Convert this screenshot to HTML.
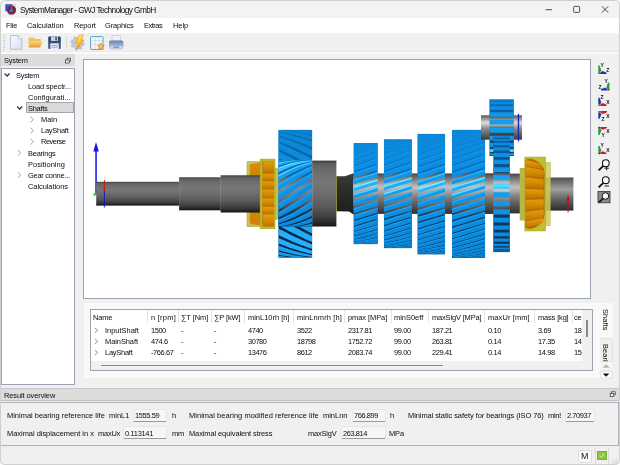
<!DOCTYPE html><html><head><meta charset="utf-8"><title>SystemManager - GWJ Technology GmbH</title><style>
*{margin:0;padding:0;box-sizing:border-box}
html,body{width:620px;height:465px;overflow:hidden;background:#f0f0f0}
body{font-family:"Liberation Sans",sans-serif;font-size:7.45px;color:#0c0c0c;position:relative}
.a{position:absolute}
.t{position:absolute;white-space:nowrap;line-height:10px;height:10px;will-change:transform}
.box{position:absolute;background:#fff;border:1px solid #9aa3b3}
.fld{position:absolute;background:#f6f6f6;border:1px solid #e6e6e6;border-bottom:1px solid #9a9a9a;border-radius:1.5px}
</style></head><body>
<div class="a" style="left:0px;top:0px;width:620px;height:18.4px;background:#f3f3f3;"></div>
<div class="a" style="left:0px;top:18.4px;width:620px;height:14.4px;background:#ffffff;"></div>
<div class="a" style="left:0px;top:33px;width:620px;height:20px;background:#f0f0f0;"></div>
<div class="a" style="left:0px;top:50.9px;width:620px;height:0.8px;background:#e8e8e8;"></div>
<div class="a" style="left:0px;top:51.7px;width:620px;height:1.9px;background:#f9f9f9;"></div>
<span class="t" style="left:19.5px;top:4.90px;font-size:8.3px;letter-spacing:-0.599px;">SystemManager - GWJ Technology GmbH</span>
<span class="t" style="left:6px;top:21.30px;letter-spacing:-0.176px;">File</span>
<span class="t" style="left:27px;top:21.30px;letter-spacing:-0.014px;">Calculation</span>
<span class="t" style="left:73.8px;top:21.30px;letter-spacing:-0.094px;">Report</span>
<span class="t" style="left:105.4px;top:21.30px;letter-spacing:-0.151px;">Graphics</span>
<span class="t" style="left:144px;top:21.30px;letter-spacing:-0.469px;">Extras</span>
<span class="t" style="left:172.6px;top:21.30px;letter-spacing:-0.031px;">Help</span>
<div class="a" style="left:0px;top:54.3px;width:75px;height:12.2px;background:#dcdcdc;"></div>
<span class="t" style="left:3.5px;top:56.20px;letter-spacing:-0.173px;">System</span>
<div class="box" style="left:0.8px;top:68px;width:74px;height:316.5px"></div>
<div class="a" style="left:26.2px;top:102.3px;width:48.2px;height:11.2px;background:#d9d9d9;border:1px solid #a6a6a6"></div>
<span class="t" style="left:15.5px;top:70.90px;letter-spacing:-0.273px;">System</span>
<span class="t" style="left:28.1px;top:81.99px;letter-spacing:-0.131px;">Load spectr...</span>
<span class="t" style="left:28.1px;top:93.08px;letter-spacing:0.026px;">Configurati...</span>
<span class="t" style="left:28.1px;top:104.17px;letter-spacing:-0.253px;">Shafts</span>
<span class="t" style="left:40.6px;top:115.26px;letter-spacing:0.013px;">Main</span>
<span class="t" style="left:40.6px;top:126.35px;letter-spacing:-0.238px;">LayShaft</span>
<span class="t" style="left:40.6px;top:137.44px;letter-spacing:-0.463px;">Reverse</span>
<span class="t" style="left:28.1px;top:148.53px;letter-spacing:-0.226px;">Bearings</span>
<span class="t" style="left:28.1px;top:159.62px;letter-spacing:0.050px;">Positioning</span>
<span class="t" style="left:28.1px;top:170.71px;letter-spacing:-0.249px;">Gear conne...</span>
<span class="t" style="left:28.1px;top:181.80px;letter-spacing:-0.049px;">Calculations</span>
<div class="box" style="left:83px;top:59px;width:508px;height:239.5px"></div>
<svg class="a" style="left:0;top:0" width="620" height="465" viewBox="0 0 620 465">
<defs>
<linearGradient id="gs" x1="0" y1="0" x2="0" y2="1"><stop offset="0" stop-color="#3a3a3a"/><stop offset=".05" stop-color="#5e5e5e"/><stop offset=".15" stop-color="#6c6c6c"/><stop offset=".32" stop-color="#767676"/><stop offset=".5" stop-color="#6e6e6e"/><stop offset=".7" stop-color="#595959"/><stop offset=".86" stop-color="#3e3e3e"/><stop offset=".95" stop-color="#262626"/><stop offset="1" stop-color="#121212"/></linearGradient>
<linearGradient id="gh" x1="0" y1="0" x2="0" y2="1"><stop offset="0" stop-color="#484848"/><stop offset=".34" stop-color="#c2c2c2"/><stop offset=".6" stop-color="#7a7a7a"/><stop offset="1" stop-color="#303030"/></linearGradient>
<linearGradient id="gr" x1="0" y1="0" x2="0" y2="1"><stop offset="0" stop-color="#555"/><stop offset=".3" stop-color="#dedede"/><stop offset=".55" stop-color="#8a8a8a"/><stop offset="1" stop-color="#3c3c3c"/></linearGradient>
<linearGradient id="gap" gradientUnits="userSpaceOnUse" x1="0" y1="129" x2="0" y2="259"><stop offset="0" stop-color="#0a7ed0"/><stop offset=".2" stop-color="#0978c8"/><stop offset=".335" stop-color="#0a6cb8"/><stop offset=".345" stop-color="#5a5a5a"/><stop offset=".44" stop-color="#c4c4c4"/><stop offset=".55" stop-color="#7c7c7c"/><stop offset=".65" stop-color="#3e3e3e"/><stop offset=".662" stop-color="#0e3f68"/><stop offset="1" stop-color="#0a2f50"/></linearGradient>
<linearGradient id="tooth" gradientUnits="userSpaceOnUse" x1="0" y1="129" x2="0" y2="259"><stop offset="0" stop-color="#0b84d6"/><stop offset=".3" stop-color="#0e94e6"/><stop offset=".4" stop-color="#1aa8f6"/><stop offset=".435" stop-color="#58e2ff"/><stop offset=".48" stop-color="#169ef0"/><stop offset=".7" stop-color="#0c8ee2"/><stop offset="1" stop-color="#0a86d8"/></linearGradient>
<linearGradient id="bback" gradientUnits="userSpaceOnUse" x1="0" y1="129" x2="0" y2="259"><stop offset="0" stop-color="#0a74c0"/><stop offset=".24" stop-color="#0a62a6"/><stop offset=".75" stop-color="#06263e"/><stop offset="1" stop-color="#062a46"/></linearGradient>

<linearGradient id="gaps" gradientUnits="userSpaceOnUse" x1="0" y1="129" x2="0" y2="259"><stop offset="0" stop-color="#0a5c9e"/><stop offset=".335" stop-color="#0a4f8a"/><stop offset=".345" stop-color="#5a5a5a"/><stop offset=".44" stop-color="#e0e0e0"/><stop offset=".55" stop-color="#7c7c7c"/><stop offset=".65" stop-color="#3a3a3a"/><stop offset=".662" stop-color="#0c3a62"/><stop offset="1" stop-color="#0a2f50"/></linearGradient>
<linearGradient id="grl" x1="0" y1="0" x2="0" y2="1"><stop offset="0" stop-color="#e69a0c"/><stop offset=".5" stop-color="#d68a02"/><stop offset="1" stop-color="#b87400"/></linearGradient>
<linearGradient id="gor" x1="0" y1="0" x2="0" y2="1"><stop offset="0" stop-color="#e88806"/><stop offset=".2" stop-color="#c88a04"/><stop offset=".8" stop-color="#c88a04"/><stop offset="1" stop-color="#e07c00"/></linearGradient>
<linearGradient id="gd" x1="0" y1="0" x2="0" y2="1"><stop offset="0" stop-color="#3a3a3a"/><stop offset=".3" stop-color="#303030"/><stop offset="1" stop-color="#1c1c1c"/></linearGradient>
<linearGradient id="gap1" gradientUnits="userSpaceOnUse" x1="0" y1="160" x2="0" y2="227"><stop offset="0" stop-color="#0a70bc"/><stop offset=".24" stop-color="#0a66ae"/><stop offset=".26" stop-color="#626262"/><stop offset=".42" stop-color="#8a8a8a"/><stop offset=".6" stop-color="#6a6a6a"/><stop offset=".74" stop-color="#3c3c3c"/><stop offset=".78" stop-color="#0c385c"/><stop offset="1" stop-color="#082c4a"/></linearGradient>
<linearGradient id="tooth1" gradientUnits="userSpaceOnUse" x1="0" y1="160" x2="0" y2="227"><stop offset="0" stop-color="#18a0f0"/><stop offset=".05" stop-color="#50dcff"/><stop offset=".12" stop-color="#18a4f4"/><stop offset=".5" stop-color="#0c90e4"/><stop offset="1" stop-color="#0a84d6"/></linearGradient>
<linearGradient id="gapr" gradientUnits="userSpaceOnUse" x1="0" y1="99" x2="0" y2="156"><stop offset="0" stop-color="#0a74c8"/><stop offset=".27" stop-color="#0a5a9c"/><stop offset=".3" stop-color="#484848"/><stop offset=".42" stop-color="#e0e0e0"/><stop offset=".52" stop-color="#555"/><stop offset=".7" stop-color="#333"/><stop offset=".72" stop-color="#0e4a78"/><stop offset="1" stop-color="#0a3a60"/></linearGradient>
<linearGradient id="toothr" gradientUnits="userSpaceOnUse" x1="0" y1="99" x2="0" y2="156"><stop offset="0" stop-color="#0b84d6"/><stop offset=".4" stop-color="#10a0f0"/><stop offset=".85" stop-color="#0e94e6"/><stop offset=".9" stop-color="#50dcff"/><stop offset="1" stop-color="#0c8ee0"/></linearGradient>
<linearGradient id="gh2" x1="0" y1="0" x2="0" y2="1"><stop offset="0" stop-color="#505050"/><stop offset=".36" stop-color="#a0a0a0"/><stop offset=".6" stop-color="#6c6c6c"/><stop offset="1" stop-color="#2c2c2c"/></linearGradient>
</defs>
<rect x="95.3" y="150" width="1.5" height="44" fill="#1010e8"/>
<polygon points="96,142 98.8,151.5 93.4,151.5" fill="#1010e8"/>
<circle cx="94.8" cy="194.4" r="1.4" fill="#10e020"/>
<rect x="96.2" y="181.8" width="83.1" height="23.8" fill="url(#gs)"/>
<rect x="179.1" y="177.3" width="41.7" height="33" fill="url(#gs)"/>
<rect x="247" y="161.7" width="13.4" height="64.8" fill="#c6c256" stroke="#aaa636" stroke-width=".6"/>
<path d="M249.8,166 Q250.5,163.8 254,163.6 L260.2,162.6 L260.2,225.4 L254,224.4 Q250.5,224.2 249.8,222 Z" fill="url(#gor)"/>
<path d="M250.5,165 L260.2,163.4" stroke="#f08408" stroke-width="1.1" fill="none"/>
<path d="M250.5,223 L260.2,224.4" stroke="#f07800" stroke-width="1.1" fill="none"/>
<rect x="220.6" y="175.3" width="39.7" height="37.2" fill="url(#gs)"/>
<rect x="103.9" y="180" width="0.9" height="11" fill="#d01010"/><rect x="103.9" y="191" width="0.9" height="16.5" fill="#1010d0"/><polygon points="103,188 105.7,188 104.35,191.5" fill="#d01010"/>
<rect x="260.2" y="167.8" width="18.1" height="52" fill="#c4c052"/>
<rect x="260.2" y="159.1" width="14.8" height="69.6" fill="#beb82e" stroke="#a6a226" stroke-width=".6"/>
<rect x="262.4" y="161" width="11.6" height="65.6" rx="1.5" fill="#b47200"/>
<rect x="263.2" y="161.25" width="10.8" height="12" rx="1" fill="url(#grl)"/>
<rect x="262.4" y="173.75" width="11.6" height="7" rx="1" fill="url(#grl)"/>
<rect x="262.4" y="181.25" width="11.6" height="7.8" rx="1" fill="url(#grl)"/>
<rect x="262.4" y="189.55" width="11.6" height="8.5" rx="1" fill="url(#grl)"/>
<rect x="262.4" y="198.55" width="11.6" height="7.8" rx="1" fill="url(#grl)"/>
<rect x="262.4" y="206.85" width="11.6" height="7" rx="1" fill="url(#grl)"/>
<rect x="263.2" y="214.35" width="10.8" height="12" rx="1" fill="url(#grl)"/>
<clipPath id="c1"><rect x="278.3" y="129.7" width="34" height="128.1"/></clipPath>
<g clip-path="url(#c1)">
<rect x="278.3" y="129.7" width="34" height="128.1" fill="url(#bback)"/>
<polygon points="278.3,129.7 283.97,129.7 289.63,129.7 295.3,129.7 300.97,129.7 306.63,129.7 312.3,129.7 312.3,129.72 306.63,129.7 300.97,129.7 295.3,129.7 289.63,129.7 283.97,129.7 278.3,129.7" fill="#0b84d4"/>
<polygon points="278.3,129.7 283.97,129.7 289.63,129.7 295.3,129.7 300.97,129.7 306.63,129.71 312.3,129.89 312.3,131.07 306.63,130.42 300.97,129.98 295.3,129.74 289.63,129.7 283.97,129.7 278.3,129.7" fill="#0b84d4"/>
<polygon points="278.3,129.7 283.97,129.7 289.63,129.74 295.3,129.97 300.97,130.41 306.63,131.05 312.3,131.89 312.3,134.56 306.63,133.27 300.97,132.17 295.3,131.27 289.63,130.58 283.97,130.08 278.3,129.79" fill="#0b84d5"/>
<polygon points="278.3,130.07 283.97,130.56 289.63,131.26 295.3,132.15 300.97,133.24 306.63,134.53 312.3,136 312.3,140.06 306.63,138.17 300.97,136.46 295.3,134.93 289.63,133.59 283.97,132.44 278.3,131.49" fill="#0b85d5"/>
<polygon points="278.3,132.42 283.97,133.57 289.63,134.9 295.3,136.43 300.97,138.14 306.63,140.02 312.3,142.08 312.3,147.4 306.63,144.97 300.97,142.7 295.3,140.59 289.63,138.66 283.97,136.9 278.3,135.32" fill="#0b86d7"/>
<polygon points="278.3,136.86 283.97,138.62 289.63,140.55 295.3,142.66 300.97,144.92 306.63,147.35 312.3,149.92 312.3,156.31 306.63,153.43 300.97,150.68 295.3,148.07 289.63,145.6 283.97,143.29 278.3,141.14" fill="#0c88d9"/>
<polygon points="278.3,143.24 283.97,145.55 289.63,148.02 295.3,150.63 300.97,153.38 306.63,156.25 312.3,159.25 312.3,166.51 306.63,163.27 300.97,160.13 295.3,157.1 289.63,154.19 283.97,151.4 278.3,148.75" fill="#0c8adc"/>
<polygon points="278.3,151.35 283.97,154.13 289.63,157.04 295.3,160.07 300.97,163.21 306.63,166.44 312.3,169.76 312.3,177.63 306.63,174.15 300.97,170.73 295.3,167.38 289.63,164.12 283.97,160.96 278.3,157.9" fill="#0d8edf"/>
<polygon points="278.3,160.89 283.97,164.06 289.63,167.32 295.3,170.66 300.97,174.08 306.63,177.56 312.3,181.09 312.3,189.3 306.63,185.69 300.97,182.11 295.3,178.56 289.63,175.07 283.97,171.63 278.3,168.27" fill="#1092e4"/>
<polygon points="278.3,171.56 283.97,175 289.63,178.49 295.3,182.04 300.97,185.62 306.63,189.23 312.3,192.85 312.3,201.13 306.63,197.51 300.97,193.89 295.3,190.26 289.63,186.65 283.97,183.06 278.3,179.5" fill="#1497e8"/>
<polygon points="278.3,182.99 283.97,186.58 289.63,190.19 295.3,193.82 300.97,197.44 306.63,201.05 312.3,204.64 312.3,212.7 306.63,209.21 300.97,205.67 295.3,202.09 289.63,198.48 283.97,194.85 278.3,191.23" fill="#189ced"/>
<polygon points="278.3,194.78 283.97,198.4 289.63,202.01 295.3,205.59 300.97,209.14 306.63,212.63 312.3,216.07 312.3,223.64 306.63,220.38 300.97,217.04 295.3,213.62 289.63,210.14 283.97,206.61 278.3,203.04" fill="#1ba1f2"/>
<polygon points="278.3,206.54 283.97,210.07 289.63,213.55 295.3,216.97 300.97,220.31 306.63,223.57 312.3,226.73 312.3,233.55 306.63,230.65 300.97,227.62 295.3,224.49 289.63,221.26 283.97,217.94 278.3,214.54" fill="#1ea6f6"/>
<polygon points="278.3,217.87 283.97,221.19 289.63,224.42 295.3,227.56 300.97,230.59 306.63,233.5 312.3,236.28 312.3,242.12 306.63,239.66 300.97,237.05 295.3,234.31 289.63,231.43 283.97,228.44 278.3,225.33" fill="#22abfa"/>
<polygon points="278.3,228.38 283.97,231.37 289.63,234.25 295.3,237 300.97,239.6 306.63,242.07 312.3,244.38 312.3,249.03 306.63,247.11 300.97,245.01 295.3,242.74 289.63,240.33 283.97,237.76 278.3,235.05" fill="#26affd"/>
<polygon points="278.3,237.7 283.97,240.28 289.63,242.7 295.3,244.96 300.97,247.06 306.63,249 312.3,250.75 312.3,254.07 306.63,252.74 300.97,251.22 295.3,249.52 289.63,247.64 283.97,245.58 278.3,243.36" fill="#25aefb"/>
<polygon points="278.3,245.54 283.97,247.6 289.63,249.48 295.3,251.19 300.97,252.71 306.63,254.04 312.3,255.19 312.3,257.05 306.63,256.37 300.97,255.48 295.3,254.39 289.63,253.11 283.97,251.64 278.3,249.99" fill="#1ca2f2"/>
<polygon points="278.3,251.61 283.97,253.08 289.63,254.37 295.3,255.46 300.97,256.35 306.63,257.04 312.3,257.53 312.3,257.9 306.63,257.86 300.97,257.63 295.3,257.2 289.63,256.57 283.97,255.73 278.3,254.7" fill="#179bed"/>
<polygon points="278.3,255.71 283.97,256.55 289.63,257.19 295.3,257.63 300.97,257.86 306.63,257.9 312.3,257.9 312.3,257.9 306.63,257.9 300.97,257.9 295.3,257.9 289.63,257.89 283.97,257.72 278.3,257.34" fill="#1498ea"/>
<polygon points="278.3,257.71 283.97,257.89 289.63,257.9 295.3,257.9 300.97,257.9 306.63,257.9 312.3,257.9 312.3,257.9 306.63,257.9 300.97,257.9 295.3,257.9 289.63,257.9 283.97,257.9 278.3,257.9" fill="#1498ea"/>
</g>
<clipPath id="c1b"><rect x="278.3" y="160.3" width="34" height="66.4"/></clipPath>
<g clip-path="url(#c1b)">
<rect x="278.3" y="160.3" width="34" height="66.4" fill="url(#gap1)"/>
<polygon points="278.3,160.69 283.97,160.6 289.63,160.6 295.3,160.6 300.97,160.6 306.63,160.6 312.3,160.6 312.3,160.6 306.63,160.6 300.97,160.6 295.3,160.6 289.63,160.64 283.97,161.04 278.3,161.86" fill="#1da8f6"/>
<polygon points="278.3,162.87 283.97,161.71 289.63,160.96 295.3,160.62 300.97,160.6 306.63,160.6 312.3,160.6 312.3,160.6 306.63,160.6 300.97,160.86 295.3,161.53 289.63,162.62 283.97,164.1 278.3,165.95" fill="#20acf7"/>
<polygon points="278.3,167.81 283.97,165.65 289.63,163.85 295.3,162.43 300.97,161.41 306.63,160.79 312.3,160.6 312.3,161.26 306.63,162.2 300.97,163.54 295.3,165.27 289.63,167.36 283.97,169.79 278.3,172.52" fill="#2fbfff"/>
<polygon points="278.3,175.05 283.97,172.09 289.63,169.4 295.3,167.03 300.97,164.99 306.63,163.32 312.3,162.03 312.3,164.64 306.63,166.6 300.97,168.92 295.3,171.55 289.63,174.46 283.97,177.61 278.3,180.97" fill="#159fef"/>
<polygon points="278.3,183.96 283.97,180.46 289.63,177.12 295.3,174 300.97,171.13 306.63,168.55 312.3,166.29 312.3,170.61 306.63,173.43 300.97,176.5 295.3,179.8 289.63,183.27 283.97,186.88 278.3,190.57" fill="#1097ea"/>
<polygon points="278.3,193.74 283.97,190.01 289.63,186.33 295.3,182.74 300.97,179.29 306.63,176.02 312.3,172.99 312.3,178.64 306.63,182.06 300.97,185.62 295.3,189.29 289.63,193.02 283.97,196.75 278.3,200.45" fill="#0d92e6"/>
<polygon points="278.3,203.53 283.97,199.9 289.63,196.19 295.3,192.46 300.97,188.74 306.63,185.08 312.3,181.53 312.3,188.02 306.63,191.73 300.97,195.47 295.3,199.19 289.63,202.84 283.97,206.37 278.3,209.74" fill="#0c8fe3"/>
<polygon points="278.3,212.45 283.97,209.25 289.63,205.85 295.3,202.29 300.97,198.63 306.63,194.91 312.3,191.17 312.3,197.91 306.63,201.59 300.97,205.17 295.3,208.6 289.63,211.85 283.97,214.87 278.3,217.62" fill="#0c8ce0"/>
<polygon points="278.3,219.72 283.97,217.22 289.63,214.43 295.3,211.38 300.97,208.1 306.63,204.64 312.3,201.04 312.3,207.44 306.63,210.76 300.97,213.86 295.3,216.71 289.63,219.26 283.97,221.5 278.3,223.38" fill="#0b8add"/>
<polygon points="278.3,224.68 283.97,223.12 289.63,221.18 295.3,218.9 300.97,216.3 306.63,213.41 312.3,210.27 312.3,215.76 306.63,218.42 300.97,220.77 295.3,222.77 289.63,224.41 283.97,225.66 278.3,226.51" fill="#0a88da"/>
<polygon points="278.3,226.9 283.97,226.41 289.63,225.5 295.3,224.19 300.97,222.49 306.63,220.43 312.3,218.04 312.3,222.12 306.63,223.89 300.97,225.28 295.3,226.26 289.63,226.84 283.97,227 278.3,227" fill="#0a87d9"/>
<polygon points="278.3,227 283.97,227 289.63,227 295.3,226.78 300.97,226.14 306.63,225.09 312.3,223.65 312.3,225.97 306.63,226.69 300.97,226.99 295.3,227 289.63,227 283.97,227 278.3,227" fill="#0a86d8"/>
<polygon points="278.3,227 283.97,227 289.63,227 295.3,227 300.97,227 306.63,226.97 312.3,226.61 312.3,227 306.63,227 300.97,227 295.3,227 289.63,227 283.97,227 278.3,227" fill="#0a86d8"/>
<polygon points="278.3,160.69 283.97,160.6 289.63,160.6 295.3,160.6 300.97,160.6 306.63,160.6 312.3,160.6 312.3,160.6 306.63,160.6 300.97,160.6 295.3,160.6 289.63,160.6 283.97,160.61 278.3,160.89" fill="#66e2ff"/>
<polygon points="278.3,162.87 283.97,161.71 289.63,160.96 295.3,160.62 300.97,160.6 306.63,160.6 312.3,160.6 312.3,160.6 306.63,160.6 300.97,160.6 295.3,160.75 289.63,161.31 283.97,162.28 278.3,163.65" fill="#67e3ff"/>
<polygon points="278.3,167.81 283.97,165.65 289.63,163.85 295.3,162.43 300.97,161.41 306.63,160.79 312.3,160.6 312.3,160.65 306.63,161.07 300.97,161.9 295.3,163.14 289.63,164.76 283.97,166.75 278.3,169.09" fill="#7bebff"/>
<polygon points="278.3,175.05 283.97,172.09 289.63,169.4 295.3,167.03 300.97,164.99 306.63,163.32 312.3,162.03 312.3,162.67 306.63,164.16 300.97,166.03 295.3,168.25 289.63,170.79 283.97,173.63 278.3,176.72" fill="#5dd4fd"/>
<polygon points="278.3,183.96 283.97,180.46 289.63,177.12 295.3,174 300.97,171.13 306.63,168.55 312.3,166.29 312.3,167.45 306.63,169.88 300.97,172.62 295.3,175.63 289.63,178.87 283.97,182.3 278.3,185.87" fill="#25adf7"/>
<polygon points="278.3,193.74 283.97,190.01 289.63,186.33 295.3,182.74 300.97,179.29 306.63,176.02 312.3,172.99 312.3,174.57 306.63,177.73 300.97,181.1 295.3,184.63 289.63,188.28 283.97,191.99 278.3,195.73" fill="#19a1f1"/>
<polygon points="278.3,203.53 283.97,199.9 289.63,196.19 295.3,192.46 300.97,188.74 306.63,185.08 312.3,181.53 312.3,183.4 306.63,187.01 300.97,190.71 295.3,194.44 289.63,198.17 283.97,201.84 278.3,205.41" fill="#189fef"/>
<polygon points="278.3,212.45 283.97,209.25 289.63,205.85 295.3,202.29 300.97,198.63 306.63,194.91 312.3,191.17 312.3,193.16 306.63,196.89 300.97,200.59 295.3,204.2 289.63,207.68 283.97,210.98 278.3,214.06" fill="#169ced"/>
<polygon points="278.3,219.72 283.97,217.22 289.63,214.43 295.3,211.38 300.97,208.1 306.63,204.64 312.3,201.04 312.3,202.97 306.63,206.5 300.97,209.87 295.3,213.03 289.63,215.95 283.97,218.59 278.3,220.92" fill="#159aeb"/>
<polygon points="278.3,224.68 283.97,223.12 289.63,221.18 295.3,218.9 300.97,216.3 306.63,213.41 312.3,210.27 312.3,211.97 306.63,214.98 300.97,217.72 295.3,220.15 289.63,222.26 283.97,224 278.3,225.36" fill="#1398ea"/>
<polygon points="278.3,226.9 283.97,226.41 289.63,225.5 295.3,224.19 300.97,222.49 306.63,220.43 312.3,218.04 312.3,219.35 306.63,221.57 300.97,223.44 295.3,224.93 289.63,226.03 283.97,226.72 278.3,227" fill="#1297e9"/>
<polygon points="278.3,227 283.97,227 289.63,227 295.3,226.78 300.97,226.14 306.63,225.09 312.3,223.65 312.3,224.46 306.63,225.7 300.97,226.53 295.3,226.95 289.63,227 283.97,227 278.3,227" fill="#1296e8"/>
<polygon points="278.3,227 283.97,227 289.63,227 295.3,227 300.97,227 306.63,226.97 312.3,226.61 312.3,226.85 306.63,227 300.97,227 295.3,227 289.63,227 283.97,227 278.3,227" fill="#1296e8"/>
</g>
<rect x="312.2" y="160.6" width="24.2" height="65.9" fill="url(#gs)"/>
<path d="M336.4,176.2 L345,176.2 L353.6,173.3 L353.6,214.6 L349,211.4 L336.4,211.3 Z" fill="url(#gd)"/>
<rect x="336" y="176" width="1" height="35" fill="#8a8830"/>
<rect x="353" y="173.4" width="140.5" height="40.5" fill="url(#gh)"/>
<clipPath id="cg0"><rect x="353.5" y="143" width="24.3" height="101.3"/></clipPath>
<g clip-path="url(#cg0)"><rect x="353.5" y="143" width="24.3" height="101.3" fill="url(#gap)"/>
<polygon points="353.5,143 357.55,143 361.6,143 365.65,143 369.7,143 373.75,143 377.8,143 377.8,143 373.75,143 369.7,143 365.65,143 361.6,143.01 357.55,143.14 353.5,143.42" fill="#0b89dc"/>
<polygon points="353.5,143.58 357.55,143.24 361.6,143.05 365.65,143 369.7,143 373.75,143 377.8,143 377.8,143 373.75,143 369.7,143.09 365.65,143.32 361.6,143.7 357.55,144.21 353.5,144.85" fill="#0b89dc"/>
<polygon points="353.5,145.18 357.55,144.48 361.6,143.91 365.65,143.47 369.7,143.17 373.75,143.02 377.8,143 377.8,143.27 373.75,143.62 369.7,144.11 365.65,144.73 361.6,145.48 357.55,146.33 353.5,147.28" fill="#0b89dc"/>
<polygon points="353.5,147.76 357.55,146.76 361.6,145.86 365.65,145.07 369.7,144.39 373.75,143.84 377.8,143.42 377.8,144.75 373.75,145.5 369.7,146.35 365.65,147.31 361.6,148.35 357.55,149.47 353.5,150.65" fill="#0b8adc"/>
<polygon points="353.5,151.28 357.55,150.06 361.6,148.91 365.65,147.83 369.7,146.83 373.75,145.92 377.8,145.12 377.8,147.61 373.75,148.68 369.7,149.82 365.65,151.02 361.6,152.27 357.55,153.57 353.5,154.9" fill="#0c8add"/>
<polygon points="353.5,155.66 357.55,154.31 361.6,152.99 365.65,151.71 369.7,150.48 373.75,149.31 377.8,148.2 377.8,151.83 373.75,153.11 369.7,154.43 365.65,155.78 361.6,157.15 357.55,158.54 353.5,159.94" fill="#0c8bde"/>
<polygon points="353.5,160.81 357.55,159.41 361.6,158.01 365.65,156.63 369.7,155.27 373.75,153.93 377.8,152.62 377.8,157.14 373.75,158.53 369.7,159.93 365.65,161.33 361.6,162.74 357.55,164.14 353.5,165.54" fill="#0c8ce0"/>
<polygon points="353.5,166.63 357.55,165.24 361.6,163.84 365.65,162.43 369.7,161.03 373.75,159.62 377.8,158.23 377.8,163.21 373.75,164.62 369.7,166.01 365.65,167.41 361.6,168.79 357.55,170.16 353.5,171.53" fill="#0c8de1"/>
<polygon points="353.5,173.01 357.55,171.65 361.6,170.29 365.65,168.92 369.7,167.54 373.75,166.15 377.8,164.75 377.8,169.86 373.75,171.23 369.7,172.58 365.65,173.93 361.6,175.26 357.55,176.58 353.5,177.89" fill="#0d91e5"/>
<polygon points="353.5,179.8 357.55,178.5 361.6,177.2 365.65,175.88 369.7,174.56 373.75,173.22 377.8,171.87 377.8,176.83 373.75,178.14 369.7,179.44 365.65,180.72 361.6,182 357.55,183.26 353.5,184.52" fill="#1099eb"/>
<polygon points="353.5,186.87 357.55,185.63 361.6,184.38 365.65,183.12 369.7,181.85 373.75,180.57 377.8,179.29 377.8,183.89 373.75,185.14 369.7,186.39 365.65,187.63 361.6,188.86 357.55,190.09 353.5,191.31" fill="#23b3fc"/>
<polygon points="353.5,194.08 357.55,192.87 361.6,191.65 365.65,190.43 369.7,189.21 373.75,187.98 377.8,186.74 377.8,191.14 373.75,192.36 369.7,193.57 365.65,194.79 361.6,196 357.55,197.21 353.5,198.41" fill="#139cee"/>
<polygon points="353.5,201.29 357.55,200.08 361.6,198.87 365.65,197.66 369.7,196.46 373.75,195.25 377.8,194.03 377.8,198.66 373.75,199.87 369.7,201.08 365.65,202.29 361.6,203.5 357.55,204.71 353.5,205.93" fill="#0e92e6"/>
<polygon points="353.5,208.34 357.55,207.11 361.6,205.89 365.65,204.68 369.7,203.46 373.75,202.25 377.8,201.04 377.8,205.79 373.75,207.01 369.7,208.23 365.65,209.46 361.6,210.69 357.55,211.92 353.5,213.16" fill="#0d8fe3"/>
<polygon points="353.5,215.09 357.55,213.84 361.6,212.6 365.65,211.37 369.7,210.14 373.75,208.91 377.8,207.68 377.8,212.45 373.75,213.69 369.7,214.93 365.65,216.18 361.6,217.43 357.55,218.68 353.5,219.93" fill="#0c8de1"/>
<polygon points="353.5,221.4 357.55,220.15 361.6,218.89 365.65,217.64 369.7,216.4 373.75,215.15 377.8,213.91 377.8,218.6 373.75,219.85 369.7,221.11 365.65,222.36 361.6,223.6 357.55,224.85 353.5,226.09" fill="#0c8bdf"/>
<polygon points="353.5,227.15 357.55,225.92 361.6,224.68 365.65,223.43 369.7,222.18 373.75,220.93 377.8,219.68 377.8,224.17 373.75,225.41 369.7,226.64 365.65,227.87 361.6,229.08 357.55,230.27 353.5,231.45" fill="#0c8ade"/>
<polygon points="353.5,232.21 357.55,231.05 361.6,229.86 365.65,228.66 369.7,227.45 373.75,226.22 377.8,224.98 377.8,229.04 373.75,230.24 369.7,231.42 365.65,232.57 361.6,233.7 357.55,234.8 353.5,235.86" fill="#0b89dc"/>
<polygon points="353.5,236.49 357.55,235.45 361.6,234.38 365.65,233.27 369.7,232.13 373.75,230.96 377.8,229.78 377.8,233.38 373.75,234.49 369.7,235.56 365.65,236.6 361.6,237.59 357.55,238.53 353.5,239.42" fill="#0b88db"/>
<polygon points="353.5,239.9 357.55,239.05 361.6,238.14 365.65,237.17 369.7,236.16 373.75,235.11 377.8,234.02 377.8,237.12 373.75,238.09 369.7,239 365.65,239.86 361.6,240.65 357.55,241.38 353.5,242.04" fill="#0b88db"/>
<polygon points="353.5,242.37 357.55,241.75 361.6,241.06 365.65,240.3 369.7,239.48 373.75,238.6 377.8,237.66 377.8,240.19 373.75,240.95 369.7,241.66 365.65,242.28 361.6,242.83 357.55,243.3 353.5,243.68" fill="#0b87da"/>
<polygon points="353.5,243.84 357.55,243.51 361.6,243.09 365.65,242.59 369.7,242 373.75,241.34 377.8,240.61 377.8,242.48 373.75,243 369.7,243.44 365.65,243.79 361.6,244.05 357.55,244.22 353.5,244.29" fill="#0b87da"/>
<polygon points="353.5,244.3 357.55,244.27 361.6,244.15 365.65,243.94 369.7,243.64 373.75,243.24 377.8,242.77 377.8,243.89 373.75,244.12 369.7,244.25 365.65,244.3 361.6,244.3 357.55,244.3 353.5,244.3" fill="#0b87d9"/>
<polygon points="353.5,244.3 357.55,244.3 361.6,244.3 365.65,244.3 369.7,244.29 373.75,244.2 377.8,244.02 377.8,244.3 373.75,244.3 369.7,244.3 365.65,244.3 361.6,244.3 357.55,244.3 353.5,244.3" fill="#0b87d9"/>
<polygon points="353.5,143 357.55,143 361.6,143 365.65,143 369.7,143 373.75,143 377.8,143 377.8,143 373.75,143 369.7,143 365.65,143 361.6,143 357.55,143 353.5,143.03" fill="#1092e2"/>
<polygon points="353.5,143.58 357.55,143.24 361.6,143.05 365.65,143 369.7,143 373.75,143 377.8,143 377.8,143 373.75,143 369.7,143 365.65,143.01 361.6,143.13 357.55,143.4 353.5,143.82" fill="#1092e2"/>
<polygon points="353.5,145.18 357.55,144.48 361.6,143.91 365.65,143.47 369.7,143.17 373.75,143.02 377.8,143 377.8,143 373.75,143.09 369.7,143.32 365.65,143.7 361.6,144.21 357.55,144.85 353.5,145.62" fill="#1092e2"/>
<polygon points="353.5,147.76 357.55,146.76 361.6,145.86 365.65,145.07 369.7,144.39 373.75,143.84 377.8,143.42 377.8,143.65 373.75,144.15 369.7,144.78 365.65,145.53 361.6,146.39 357.55,147.34 353.5,148.39" fill="#1192e3"/>
<polygon points="353.5,151.28 357.55,150.06 361.6,148.91 365.65,147.83 369.7,146.83 373.75,145.92 377.8,145.12 377.8,145.62 373.75,146.49 369.7,147.46 365.65,148.52 361.6,149.65 357.55,150.84 353.5,152.09" fill="#1193e4"/>
<polygon points="353.5,155.66 357.55,154.31 361.6,152.99 365.65,151.71 369.7,150.48 373.75,149.31 377.8,148.2 377.8,148.98 373.75,150.14 369.7,151.35 365.65,152.62 361.6,153.93 357.55,155.27 353.5,156.63" fill="#1294e5"/>
<polygon points="353.5,160.81 357.55,159.41 361.6,158.01 365.65,156.63 369.7,155.27 373.75,153.93 377.8,152.62 377.8,153.66 373.75,154.99 369.7,156.35 365.65,157.73 361.6,159.12 357.55,160.52 353.5,161.93" fill="#1295e7"/>
<polygon points="353.5,166.63 357.55,165.24 361.6,163.84 365.65,162.43 369.7,161.03 373.75,159.62 377.8,158.23 377.8,159.47 373.75,160.87 369.7,162.28 365.65,163.68 361.6,165.08 357.55,166.48 353.5,167.87" fill="#1397e8"/>
<polygon points="353.5,173.01 357.55,171.65 361.6,170.29 365.65,168.92 369.7,167.54 373.75,166.15 377.8,164.75 377.8,166.14 373.75,167.53 369.7,168.91 365.65,170.28 361.6,171.64 357.55,172.99 353.5,174.33" fill="#189eed"/>
<polygon points="353.5,179.8 357.55,178.5 361.6,177.2 365.65,175.88 369.7,174.56 373.75,173.22 377.8,171.87 377.8,173.34 373.75,174.68 369.7,176 365.65,177.32 361.6,178.62 357.55,179.91 353.5,181.2" fill="#2fb9fb"/>
<polygon points="353.5,186.87 357.55,185.63 361.6,184.38 365.65,183.12 369.7,181.85 373.75,180.57 377.8,179.29 377.8,180.78 373.75,182.06 369.7,183.32 365.65,184.58 361.6,185.83 357.55,187.07 353.5,188.31" fill="#7feeff"/>
<polygon points="353.5,194.08 357.55,192.87 361.6,191.65 365.65,190.43 369.7,189.21 373.75,187.98 377.8,186.74 377.8,188.22 373.75,189.45 369.7,190.67 365.65,191.89 361.6,193.11 357.55,194.32 353.5,195.53" fill="#54d2ff"/>
<polygon points="353.5,201.29 357.55,200.08 361.6,198.87 365.65,197.66 369.7,196.46 373.75,195.25 377.8,194.03 377.8,195.46 373.75,196.67 369.7,197.88 365.65,199.09 361.6,200.3 357.55,201.5 353.5,202.72" fill="#1ea6f4"/>
<polygon points="353.5,208.34 357.55,207.11 361.6,205.89 365.65,204.68 369.7,203.46 373.75,202.25 377.8,201.04 377.8,202.4 373.75,203.61 369.7,204.83 365.65,206.05 361.6,207.26 357.55,208.49 353.5,209.71" fill="#1ba3f2"/>
<polygon points="353.5,215.09 357.55,213.84 361.6,212.6 365.65,211.37 369.7,210.14 373.75,208.91 377.8,207.68 377.8,208.96 373.75,210.19 369.7,211.42 365.65,212.66 361.6,213.9 357.55,215.14 353.5,216.39" fill="#19a1f1"/>
<polygon points="353.5,221.4 357.55,220.15 361.6,218.89 365.65,217.64 369.7,216.4 373.75,215.15 377.8,213.91 377.8,215.1 373.75,216.34 369.7,217.59 365.65,218.84 361.6,220.09 357.55,221.35 353.5,222.6" fill="#189fef"/>
<polygon points="353.5,227.15 357.55,225.92 361.6,224.68 365.65,223.43 369.7,222.18 373.75,220.93 377.8,219.68 377.8,220.78 373.75,222.03 369.7,223.28 365.65,224.52 361.6,225.76 357.55,227 353.5,228.22" fill="#179eee"/>
<polygon points="353.5,232.21 357.55,231.05 361.6,229.86 365.65,228.66 369.7,227.45 373.75,226.22 377.8,224.98 377.8,225.98 373.75,227.21 369.7,228.43 365.65,229.64 361.6,230.82 357.55,231.99 353.5,233.13" fill="#169ded"/>
<polygon points="353.5,236.49 357.55,235.45 361.6,234.38 365.65,233.27 369.7,232.13 373.75,230.96 377.8,229.78 377.8,230.67 373.75,231.84 369.7,232.99 365.65,234.11 361.6,235.19 357.55,236.24 353.5,237.25" fill="#159ced"/>
<polygon points="353.5,239.9 357.55,239.05 361.6,238.14 365.65,237.17 369.7,236.16 373.75,235.11 377.8,234.02 377.8,234.8 373.75,235.86 369.7,236.89 365.65,237.86 361.6,238.79 357.55,239.66 353.5,240.47" fill="#159bec"/>
<polygon points="353.5,242.37 357.55,241.75 361.6,241.06 365.65,240.3 369.7,239.48 373.75,238.6 377.8,237.66 377.8,238.31 373.75,239.21 369.7,240.05 365.65,240.83 361.6,241.54 357.55,242.18 353.5,242.74" fill="#159aeb"/>
<polygon points="353.5,243.84 357.55,243.51 361.6,243.09 365.65,242.59 369.7,242 373.75,241.34 377.8,240.61 377.8,241.11 373.75,241.79 369.7,242.4 365.65,242.93 361.6,243.38 357.55,243.74 353.5,244.02" fill="#149aeb"/>
<polygon points="353.5,244.3 357.55,244.27 361.6,244.15 365.65,243.94 369.7,243.64 373.75,243.24 377.8,242.77 377.8,243.1 373.75,243.52 369.7,243.85 365.65,244.09 361.6,244.24 357.55,244.3 353.5,244.3" fill="#1499eb"/>
<polygon points="353.5,244.3 357.55,244.3 361.6,244.3 365.65,244.3 369.7,244.29 373.75,244.2 377.8,244.02 377.8,244.15 373.75,244.27 369.7,244.3 365.65,244.3 361.6,244.3 357.55,244.3 353.5,244.3" fill="#1499eb"/>
</g>
<clipPath id="cg1"><rect x="383.8" y="139.2" width="28.1" height="109"/></clipPath>
<g clip-path="url(#cg1)"><rect x="383.8" y="139.2" width="28.1" height="109" fill="url(#gap)"/>
<polygon points="383.8,139.2 388.48,139.2 393.17,139.2 397.85,139.2 402.53,139.2 407.22,139.2 411.9,139.2 411.9,139.2 407.22,139.2 402.53,139.2 397.85,139.2 393.17,139.2 388.48,139.25 383.8,139.47" fill="#0b88db"/>
<polygon points="383.8,139.59 388.48,139.31 393.17,139.2 397.85,139.2 402.53,139.2 407.22,139.2 411.9,139.2 411.9,139.2 407.22,139.2 402.53,139.2 397.85,139.29 393.17,139.56 388.48,140.02 383.8,140.64" fill="#0b88db"/>
<polygon points="383.8,140.91 388.48,140.23 393.17,139.71 397.85,139.37 402.53,139.21 407.22,139.2 411.9,139.2 411.9,139.21 407.22,139.37 402.53,139.71 397.85,140.23 393.17,140.91 388.48,141.74 383.8,142.71" fill="#0b88db"/>
<polygon points="383.8,143.13 388.48,142.11 393.17,141.22 397.85,140.47 402.53,139.89 407.22,139.48 411.9,139.25 411.9,139.95 407.22,140.55 402.53,141.31 397.85,142.22 393.17,143.26 388.48,144.41 383.8,145.66" fill="#0b89db"/>
<polygon points="383.8,146.21 388.48,144.92 393.17,143.72 397.85,142.64 402.53,141.67 407.22,140.85 411.9,140.18 411.9,141.92 407.22,142.92 402.53,144.04 397.85,145.27 393.17,146.58 388.48,147.98 383.8,149.44" fill="#0b89dc"/>
<polygon points="383.8,150.11 388.48,148.63 393.17,147.21 397.85,145.85 402.53,144.58 407.22,143.41 411.9,142.36 411.9,145.18 407.22,146.5 402.53,147.88 397.85,149.34 393.17,150.84 388.48,152.39 383.8,153.96" fill="#0b8add"/>
<polygon points="383.8,154.75 388.48,153.17 393.17,151.6 397.85,150.08 402.53,148.6 407.22,147.17 411.9,145.82 411.9,149.68 407.22,151.2 402.53,152.75 397.85,154.33 393.17,155.94 388.48,157.55 383.8,159.17" fill="#0c8bde"/>
<polygon points="383.8,160.06 388.48,158.44 393.17,156.82 397.85,155.21 402.53,153.62 407.22,152.05 411.9,150.51 411.9,155.08 407.22,156.69 402.53,158.31 397.85,159.93 393.17,161.55 388.48,163.17 383.8,164.78" fill="#0c8cdf"/>
<polygon points="383.8,165.95 388.48,164.34 393.17,162.73 397.85,161.11 402.53,159.49 407.22,157.86 411.9,156.25 411.9,161.2 407.22,162.82 402.53,164.43 397.85,166.04 393.17,167.63 388.48,169.21 383.8,170.78" fill="#0c8de1"/>
<polygon points="383.8,172.31 388.48,170.75 393.17,169.19 397.85,167.6 402.53,166.01 407.22,164.41 411.9,162.79 411.9,167.85 407.22,169.42 402.53,170.99 397.85,172.54 393.17,174.08 388.48,175.61 383.8,177.12" fill="#0d90e4"/>
<polygon points="383.8,179.03 388.48,177.54 393.17,176.03 397.85,174.51 402.53,172.98 407.22,171.43 411.9,169.87 411.9,174.78 407.22,176.3 402.53,177.8 397.85,179.29 393.17,180.77 388.48,182.24 383.8,183.69" fill="#1097e9"/>
<polygon points="383.8,186.01 388.48,184.57 393.17,183.12 397.85,181.66 402.53,180.19 407.22,178.71 411.9,177.21 411.9,181.79 407.22,183.25 402.53,184.7 397.85,186.14 393.17,187.57 388.48,189 383.8,190.41" fill="#1cacf8"/>
<polygon points="383.8,193.12 388.48,191.71 393.17,190.3 397.85,188.88 402.53,187.46 407.22,186.03 411.9,184.59 411.9,188.89 407.22,190.31 402.53,191.72 397.85,193.13 393.17,194.53 388.48,195.93 383.8,197.33" fill="#15a0f0"/>
<polygon points="383.8,200.24 388.48,198.84 393.17,197.44 397.85,196.05 402.53,194.65 407.22,193.24 411.9,191.84 411.9,196.36 407.22,197.76 402.53,199.16 397.85,200.55 393.17,201.95 388.48,203.35 383.8,204.75" fill="#0e93e7"/>
<polygon points="383.8,207.24 388.48,205.84 393.17,204.43 397.85,203.03 402.53,201.63 407.22,200.23 411.9,198.84 411.9,203.49 407.22,204.89 402.53,206.3 397.85,207.71 393.17,209.12 388.48,210.54 383.8,211.96" fill="#0d90e4"/>
<polygon points="383.8,214.02 388.48,212.59 393.17,211.16 397.85,209.75 402.53,208.33 407.22,206.92 411.9,205.51 411.9,210.21 407.22,211.63 402.53,213.06 397.85,214.49 393.17,215.92 388.48,217.36 383.8,218.81" fill="#0c8de1"/>
<polygon points="383.8,220.45 388.48,219 393.17,217.56 397.85,216.11 402.53,214.68 407.22,213.25 411.9,211.82 411.9,216.49 407.22,217.94 402.53,219.38 397.85,220.83 393.17,222.28 388.48,223.72 383.8,225.17" fill="#0c8bdf"/>
<polygon points="383.8,226.41 388.48,224.97 393.17,223.52 397.85,222.08 402.53,220.63 407.22,219.18 411.9,217.74 411.9,222.31 407.22,223.76 402.53,225.21 397.85,226.65 393.17,228.09 388.48,229.51 383.8,230.93" fill="#0c8ade"/>
<polygon points="383.8,231.82 388.48,230.42 393.17,229 397.85,227.57 402.53,226.13 407.22,224.69 411.9,223.24 411.9,227.54 407.22,228.97 402.53,230.39 397.85,231.79 393.17,233.18 388.48,234.54 383.8,235.87" fill="#0b89dd"/>
<polygon points="383.8,236.58 388.48,235.27 393.17,233.92 397.85,232.55 402.53,231.16 407.22,229.75 411.9,228.32 411.9,232.24 407.22,233.62 402.53,234.97 397.85,236.29 393.17,237.58 388.48,238.82 383.8,240.01" fill="#0b88dc"/>
<polygon points="383.8,240.61 388.48,239.44 393.17,238.22 397.85,236.95 402.53,235.65 407.22,234.31 411.9,232.95 411.9,236.46 407.22,237.74 402.53,238.98 397.85,240.17 393.17,241.3 388.48,242.37 383.8,243.37" fill="#0b88db"/>
<polygon points="383.8,243.83 388.48,242.86 393.17,241.83 397.85,240.73 402.53,239.56 407.22,238.35 411.9,237.09 411.9,240.16 407.22,241.29 402.53,242.36 397.85,243.36 393.17,244.28 388.48,245.12 383.8,245.87" fill="#0b87da"/>
<polygon points="383.8,246.19 388.48,245.48 393.17,244.69 397.85,243.8 402.53,242.84 407.22,241.8 411.9,240.7 411.9,243.26 407.22,244.19 402.53,245.04 397.85,245.8 393.17,246.46 388.48,247.03 383.8,247.48" fill="#0b87d9"/>
<polygon points="383.8,247.65 388.48,247.25 393.17,246.73 397.85,246.12 402.53,245.4 407.22,244.59 411.9,243.7 411.9,245.69 407.22,246.37 402.53,246.95 397.85,247.42 393.17,247.79 388.48,248.04 383.8,248.17" fill="#0b86d9"/>
<polygon points="383.8,248.2 388.48,248.11 393.17,247.91 397.85,247.6 402.53,247.18 407.22,246.65 411.9,246.02 411.9,247.36 407.22,247.74 402.53,248.01 397.85,248.16 393.17,248.2 388.48,248.2 383.8,248.2" fill="#0b86d9"/>
<polygon points="383.8,248.2 388.48,248.2 393.17,248.2 397.85,248.19 402.53,248.09 407.22,247.87 411.9,247.54 411.9,248.14 407.22,248.2 402.53,248.2 397.85,248.2 393.17,248.2 388.48,248.2 383.8,248.2" fill="#0a86d8"/>
<polygon points="383.8,248.2 388.48,248.2 393.17,248.2 397.85,248.2 402.53,248.2 407.22,248.2 411.9,248.18 411.9,248.2 407.22,248.2 402.53,248.2 397.85,248.2 393.17,248.2 388.48,248.2 383.8,248.2" fill="#0a86d8"/>
<polygon points="383.8,139.2 388.48,139.2 393.17,139.2 397.85,139.2 402.53,139.2 407.22,139.2 411.9,139.2 411.9,139.2 407.22,139.2 402.53,139.2 397.85,139.2 393.17,139.2 388.48,139.2 383.8,139.21" fill="#1091e1"/>
<polygon points="383.8,139.59 388.48,139.31 393.17,139.2 397.85,139.2 402.53,139.2 407.22,139.2 411.9,139.2 411.9,139.2 407.22,139.2 402.53,139.2 397.85,139.2 393.17,139.22 388.48,139.41 383.8,139.78" fill="#1091e1"/>
<polygon points="383.8,140.91 388.48,140.23 393.17,139.71 397.85,139.37 402.53,139.21 407.22,139.2 411.9,139.2 411.9,139.2 407.22,139.2 402.53,139.26 397.85,139.51 393.17,139.93 388.48,140.53 383.8,141.28" fill="#1091e1"/>
<polygon points="383.8,143.13 388.48,142.11 393.17,141.22 397.85,140.47 402.53,139.89 407.22,139.48 411.9,139.25 411.9,139.34 407.22,139.66 402.53,140.16 397.85,140.82 393.17,141.64 388.48,142.6 383.8,143.68" fill="#1091e2"/>
<polygon points="383.8,146.21 388.48,144.92 393.17,143.72 397.85,142.64 402.53,141.67 407.22,140.85 411.9,140.18 411.9,140.52 407.22,141.27 402.53,142.16 397.85,143.19 393.17,144.34 388.48,145.59 383.8,146.93" fill="#1092e2"/>
<polygon points="383.8,150.11 388.48,148.63 393.17,147.21 397.85,145.85 402.53,144.58 407.22,143.41 411.9,142.36 411.9,142.95 407.22,144.07 402.53,145.3 397.85,146.62 393.17,148.01 388.48,149.47 383.8,150.98" fill="#1192e3"/>
<polygon points="383.8,154.75 388.48,153.17 393.17,151.6 397.85,150.08 402.53,148.6 407.22,147.17 411.9,145.82 411.9,146.67 407.22,148.06 402.53,149.52 397.85,151.04 393.17,152.59 388.48,154.16 383.8,155.77" fill="#1194e5"/>
<polygon points="383.8,160.06 388.48,158.44 393.17,156.82 397.85,155.21 402.53,153.62 407.22,152.05 411.9,150.51 411.9,151.58 407.22,153.14 402.53,154.73 397.85,156.33 393.17,157.95 388.48,159.57 383.8,161.2" fill="#1295e6"/>
<polygon points="383.8,165.95 388.48,164.34 393.17,162.73 397.85,161.11 402.53,159.49 407.22,157.86 411.9,156.25 411.9,157.5 407.22,159.12 402.53,160.75 397.85,162.37 393.17,163.98 388.48,165.59 383.8,167.19" fill="#1396e8"/>
<polygon points="383.8,172.31 388.48,170.75 393.17,169.19 397.85,167.6 402.53,166.01 407.22,164.41 411.9,162.79 411.9,164.17 407.22,165.78 402.53,167.38 397.85,168.96 393.17,170.53 388.48,172.09 383.8,173.63" fill="#1599eb"/>
<polygon points="383.8,179.03 388.48,177.54 393.17,176.03 397.85,174.51 402.53,172.98 407.22,171.43 411.9,169.87 411.9,171.32 407.22,172.87 402.53,174.41 397.85,175.93 393.17,177.44 388.48,178.93 383.8,180.41" fill="#26b1f8"/>
<polygon points="383.8,186.01 388.48,184.57 393.17,183.12 397.85,181.66 402.53,180.19 407.22,178.71 411.9,177.21 411.9,178.69 407.22,180.17 402.53,181.64 397.85,183.1 393.17,184.55 388.48,185.99 383.8,187.43" fill="#73ebff"/>
<polygon points="383.8,193.12 388.48,191.71 393.17,190.3 397.85,188.88 402.53,187.46 407.22,186.03 411.9,184.59 411.9,186.05 407.22,187.48 402.53,188.91 397.85,190.33 393.17,191.74 388.48,193.14 383.8,194.55" fill="#79e4ff"/>
<polygon points="383.8,200.24 388.48,198.84 393.17,197.44 397.85,196.05 402.53,194.65 407.22,193.24 411.9,191.84 411.9,193.26 407.22,194.66 402.53,196.06 397.85,197.46 393.17,198.86 388.48,200.25 383.8,201.65" fill="#25adf6"/>
<polygon points="383.8,207.24 388.48,205.84 393.17,204.43 397.85,203.03 402.53,201.63 407.22,200.23 411.9,198.84 411.9,200.2 407.22,201.6 402.53,203 397.85,204.4 393.17,205.8 388.48,207.21 383.8,208.62" fill="#1ca4f3"/>
<polygon points="383.8,214.02 388.48,212.59 393.17,211.16 397.85,209.75 402.53,208.33 407.22,206.92 411.9,205.51 411.9,206.8 407.22,208.22 402.53,209.63 397.85,211.05 393.17,212.47 388.48,213.9 383.8,215.34" fill="#1aa2f1"/>
<polygon points="383.8,220.45 388.48,219 393.17,217.56 397.85,216.11 402.53,214.68 407.22,213.25 411.9,211.82 411.9,213.04 407.22,214.47 402.53,215.9 397.85,217.34 393.17,218.79 388.48,220.23 383.8,221.68" fill="#18a0f0"/>
<polygon points="383.8,226.41 388.48,224.97 393.17,223.52 397.85,222.08 402.53,220.63 407.22,219.18 411.9,217.74 411.9,218.87 407.22,220.32 402.53,221.77 397.85,223.21 393.17,224.66 388.48,226.11 383.8,227.54" fill="#179eef"/>
<polygon points="383.8,231.82 388.48,230.42 393.17,229 397.85,227.57 402.53,226.13 407.22,224.69 411.9,223.24 411.9,224.29 407.22,225.74 402.53,227.18 397.85,228.61 393.17,230.03 388.48,231.44 383.8,232.83" fill="#169dee"/>
<polygon points="383.8,236.58 388.48,235.27 393.17,233.92 397.85,232.55 402.53,231.16 407.22,229.75 411.9,228.32 411.9,229.28 407.22,230.7 402.53,232.1 397.85,233.48 393.17,234.83 388.48,236.16 383.8,237.45" fill="#169ced"/>
<polygon points="383.8,240.61 388.48,239.44 393.17,238.22 397.85,236.95 402.53,235.65 407.22,234.31 411.9,232.95 411.9,233.82 407.22,235.17 402.53,236.48 397.85,237.76 393.17,239 388.48,240.18 383.8,241.32" fill="#159bec"/>
<polygon points="383.8,243.83 388.48,242.86 393.17,241.83 397.85,240.73 402.53,239.56 407.22,238.35 411.9,237.09 411.9,237.86 407.22,239.09 402.53,240.27 397.85,241.4 393.17,242.46 388.48,243.45 383.8,244.37" fill="#149aeb"/>
<polygon points="383.8,246.19 388.48,245.48 393.17,244.69 397.85,243.8 402.53,242.84 407.22,241.8 411.9,240.7 411.9,241.35 407.22,242.41 402.53,243.41 397.85,244.33 393.17,245.16 388.48,245.91 383.8,246.56" fill="#1499eb"/>
<polygon points="383.8,247.65 388.48,247.25 393.17,246.73 397.85,246.12 402.53,245.4 407.22,244.59 411.9,243.7 411.9,244.22 407.22,245.06 402.53,245.82 397.85,246.48 393.17,247.04 388.48,247.49 383.8,247.84" fill="#1499ea"/>
<polygon points="383.8,248.2 388.48,248.11 393.17,247.91 397.85,247.6 402.53,247.18 407.22,246.65 411.9,246.02 411.9,246.39 407.22,246.96 402.53,247.43 397.85,247.79 393.17,248.04 388.48,248.17 383.8,248.2" fill="#1499ea"/>
<polygon points="383.8,248.2 388.48,248.2 393.17,248.2 397.85,248.19 402.53,248.09 407.22,247.87 411.9,247.54 411.9,247.75 407.22,248.01 402.53,248.16 397.85,248.2 393.17,248.2 388.48,248.2 383.8,248.2" fill="#1398ea"/>
<polygon points="383.8,248.2 388.48,248.2 393.17,248.2 397.85,248.2 402.53,248.2 407.22,248.2 411.9,248.18 411.9,248.2 407.22,248.2 402.53,248.2 397.85,248.2 393.17,248.2 388.48,248.2 383.8,248.2" fill="#1398ea"/>
</g>
<clipPath id="cg2"><rect x="417.4" y="133.8" width="27.8" height="120.7"/></clipPath>
<g clip-path="url(#cg2)"><rect x="417.4" y="133.8" width="27.8" height="120.7" fill="url(#gap)"/>
<polygon points="417.4,133.8 422.03,133.8 426.67,133.8 431.3,133.8 435.93,133.8 440.57,133.8 445.2,133.8 445.2,133.8 440.57,133.8 435.93,133.8 431.3,133.8 426.67,133.8 422.03,133.8 417.4,133.8" fill="#0b87d9"/>
<polygon points="417.4,133.83 422.03,133.8 426.67,133.8 431.3,133.8 435.93,133.8 440.57,133.8 445.2,133.8 445.2,133.8 440.57,133.8 435.93,133.8 431.3,133.8 426.67,133.82 422.03,133.99 417.4,134.32" fill="#0b87d9"/>
<polygon points="417.4,134.48 422.03,134.1 426.67,133.87 431.3,133.8 435.93,133.8 440.57,133.8 445.2,133.8 445.2,133.8 440.57,133.8 435.93,133.87 431.3,134.1 426.67,134.48 422.03,135.02 417.4,135.71" fill="#0b87d9"/>
<polygon points="417.4,136.01 422.03,135.27 426.67,134.68 431.3,134.23 435.93,133.94 440.57,133.81 445.2,133.8 445.2,133.95 440.57,134.26 435.93,134.72 431.3,135.32 426.67,136.07 422.03,136.95 417.4,137.95" fill="#0b87d9"/>
<polygon points="417.4,138.39 422.03,137.34 426.67,136.42 431.3,135.61 435.93,134.94 440.57,134.42 445.2,134.06 445.2,135.06 440.57,135.75 435.93,136.58 431.3,137.53 426.67,138.6 422.03,139.76 417.4,141.01" fill="#0b88da"/>
<polygon points="417.4,141.58 422.03,140.29 426.67,139.09 431.3,137.98 435.93,136.98 440.57,136.09 445.2,135.34 445.2,137.31 440.57,138.35 435.93,139.49 431.3,140.72 426.67,142.03 422.03,143.41 417.4,144.85" fill="#0b88db"/>
<polygon points="417.4,145.53 422.03,144.07 426.67,142.67 431.3,141.32 435.93,140.05 440.57,138.86 445.2,137.77 445.2,140.72 440.57,142.03 435.93,143.41 431.3,144.85 426.67,146.33 422.03,147.85 417.4,149.41" fill="#0b89dc"/>
<polygon points="417.4,150.2 422.03,148.63 426.67,147.09 431.3,145.59 435.93,144.13 440.57,142.72 445.2,141.37 445.2,145.25 440.57,146.75 435.93,148.28 431.3,149.84 426.67,151.42 422.03,153.01 417.4,154.61" fill="#0b8add"/>
<polygon points="417.4,155.5 422.03,153.9 426.67,152.3 431.3,150.71 435.93,149.14 440.57,147.59 445.2,146.07 445.2,150.66 440.57,152.25 435.93,153.84 431.3,155.45 426.67,157.06 422.03,158.67 417.4,160.27" fill="#0c8bde"/>
<polygon points="417.4,161.37 422.03,159.77 426.67,158.17 431.3,156.56 435.93,154.95 440.57,153.34 445.2,151.75 445.2,156.73 440.57,158.34 435.93,159.94 431.3,161.54 426.67,163.13 422.03,164.72 417.4,166.29" fill="#0c8ce0"/>
<polygon points="417.4,167.72 422.03,166.16 426.67,164.59 431.3,163 435.93,161.41 440.57,159.81 445.2,158.21 445.2,163.35 440.57,164.93 435.93,166.5 431.3,168.06 426.67,169.6 422.03,171.14 417.4,172.66" fill="#0c8de1"/>
<polygon points="417.4,174.45 422.03,172.94 426.67,171.43 431.3,169.89 435.93,168.35 440.57,166.8 445.2,165.23 445.2,170.32 440.57,171.85 435.93,173.36 431.3,174.86 426.67,176.35 422.03,177.83 417.4,179.3" fill="#0e92e6"/>
<polygon points="417.4,181.47 422.03,180.02 426.67,178.56 431.3,177.08 435.93,175.6 440.57,174.1 445.2,172.59 445.2,177.46 440.57,178.93 435.93,180.39 431.3,181.84 426.67,183.27 422.03,184.71 417.4,186.13" fill="#129dee"/>
<polygon points="417.4,188.67 422.03,187.27 426.67,185.85 431.3,184.42 435.93,182.99 440.57,181.55 445.2,180.1 445.2,184.62 440.57,186.04 435.93,187.45 431.3,188.86 426.67,190.26 422.03,191.66 417.4,193.06" fill="#27b7fe"/>
<polygon points="417.4,195.96 422.03,194.57 426.67,193.18 431.3,191.79 435.93,190.39 440.57,188.99 445.2,187.58 445.2,192.05 440.57,193.44 435.93,194.83 431.3,196.21 426.67,197.6 422.03,198.98 417.4,200.36" fill="#1199eb"/>
<polygon points="417.4,203.22 422.03,201.83 426.67,200.45 431.3,199.07 435.93,197.69 440.57,196.3 445.2,194.92 445.2,199.58 440.57,200.96 435.93,202.34 431.3,203.72 426.67,205.11 422.03,206.5 417.4,207.88" fill="#0d92e6"/>
<polygon points="417.4,210.34 422.03,208.95 426.67,207.56 431.3,206.17 435.93,204.78 440.57,203.4 445.2,202.01 445.2,206.79 440.57,208.18 435.93,209.57 431.3,210.97 426.67,212.37 422.03,213.77 417.4,215.18" fill="#0d8fe3"/>
<polygon points="417.4,217.23 422.03,215.82 426.67,214.41 431.3,213 435.93,211.6 440.57,210.2 445.2,208.8 445.2,213.62 440.57,215.03 435.93,216.44 431.3,217.86 426.67,219.28 422.03,220.7 417.4,222.13" fill="#0c8ce0"/>
<polygon points="417.4,223.79 422.03,222.36 426.67,220.93 431.3,219.5 435.93,218.08 440.57,216.66 445.2,215.25 445.2,220.04 440.57,221.47 435.93,222.9 431.3,224.33 426.67,225.76 422.03,227.19 417.4,228.62" fill="#0c8bde"/>
<polygon points="417.4,229.91 422.03,228.48 426.67,227.05 431.3,225.62 435.93,224.19 440.57,222.76 445.2,221.33 445.2,226.03 440.57,227.46 435.93,228.89 431.3,230.31 426.67,231.73 422.03,233.15 417.4,234.55" fill="#0b8add"/>
<polygon points="417.4,235.51 422.03,234.11 426.67,232.7 431.3,231.29 435.93,229.87 440.57,228.44 445.2,227.01 445.2,231.46 440.57,232.87 435.93,234.28 431.3,235.67 426.67,237.05 422.03,238.41 417.4,239.75" fill="#0b89dc"/>
<polygon points="417.4,240.5 422.03,239.18 426.67,237.83 431.3,236.47 435.93,235.08 440.57,233.68 445.2,232.27 445.2,236.36 440.57,237.73 435.93,239.07 431.3,240.4 426.67,241.69 422.03,242.96 417.4,244.18" fill="#0b88db"/>
<polygon points="417.4,244.82 422.03,243.62 426.67,242.38 431.3,241.1 435.93,239.79 440.57,238.46 445.2,237.1 445.2,240.79 440.57,242.07 435.93,243.32 431.3,244.54 426.67,245.7 422.03,246.82 417.4,247.88" fill="#0b87da"/>
<polygon points="417.4,248.4 422.03,247.37 426.67,246.28 431.3,245.14 435.93,243.95 440.57,242.72 445.2,241.45 445.2,244.71 440.57,245.87 435.93,246.98 431.3,248.03 426.67,249.03 422.03,249.95 417.4,250.8" fill="#0b86d9"/>
<polygon points="417.4,251.19 422.03,250.38 426.67,249.49 431.3,248.53 435.93,247.51 440.57,246.42 445.2,245.29 445.2,248.07 440.57,249.06 435.93,249.98 431.3,250.83 426.67,251.61 422.03,252.29 417.4,252.9" fill="#0a86d8"/>
<polygon points="417.4,253.15 422.03,252.59 426.67,251.95 431.3,251.21 435.93,250.4 440.57,249.51 445.2,248.55 445.2,250.81 440.57,251.58 435.93,252.27 431.3,252.88 426.67,253.39 422.03,253.81 417.4,254.13" fill="#0a85d8"/>
<polygon points="417.4,254.25 422.03,253.98 426.67,253.6 431.3,253.13 435.93,252.57 440.57,251.92 445.2,251.18 445.2,252.85 440.57,253.37 435.93,253.79 431.3,254.12 426.67,254.35 422.03,254.47 417.4,254.5" fill="#0a85d7"/>
<polygon points="417.4,254.5 422.03,254.5 426.67,254.42 431.3,254.24 435.93,253.96 440.57,253.58 445.2,253.1 445.2,254.1 440.57,254.34 435.93,254.47 431.3,254.5 426.67,254.5 422.03,254.5 417.4,254.5" fill="#0a85d7"/>
<polygon points="417.4,254.5 422.03,254.5 426.67,254.5 431.3,254.5 435.93,254.49 440.57,254.41 445.2,254.23 445.2,254.5 440.57,254.5 435.93,254.5 431.3,254.5 426.67,254.5 422.03,254.5 417.4,254.5" fill="#0a85d7"/>
<polygon points="417.4,133.83 422.03,133.8 426.67,133.8 431.3,133.8 435.93,133.8 440.57,133.8 445.2,133.8 445.2,133.8 440.57,133.8 435.93,133.8 431.3,133.8 426.67,133.8 422.03,133.8 417.4,133.89" fill="#0f8fdf"/>
<polygon points="417.4,134.48 422.03,134.1 426.67,133.87 431.3,133.8 435.93,133.8 440.57,133.8 445.2,133.8 445.2,133.8 440.57,133.8 435.93,133.8 431.3,133.81 426.67,133.95 422.03,134.26 417.4,134.72" fill="#0f8fdf"/>
<polygon points="417.4,136.01 422.03,135.27 426.67,134.68 431.3,134.23 435.93,133.94 440.57,133.81 445.2,133.8 445.2,133.8 440.57,133.85 435.93,134.06 431.3,134.43 426.67,134.95 422.03,135.62 417.4,136.42" fill="#0f8fe0"/>
<polygon points="417.4,138.39 422.03,137.34 426.67,136.42 431.3,135.61 435.93,134.94 440.57,134.42 445.2,134.06 445.2,134.22 440.57,134.67 435.93,135.27 431.3,136.01 426.67,136.88 422.03,137.87 417.4,138.96" fill="#0f90e0"/>
<polygon points="417.4,141.58 422.03,140.29 426.67,139.09 431.3,137.98 435.93,136.98 440.57,136.09 445.2,135.34 445.2,135.73 440.57,136.56 435.93,137.51 431.3,138.57 426.67,139.73 422.03,140.98 417.4,142.31" fill="#0f90e1"/>
<polygon points="417.4,145.53 422.03,144.07 426.67,142.67 431.3,141.32 435.93,140.05 440.57,138.86 445.2,137.77 445.2,138.4 440.57,139.55 435.93,140.79 431.3,142.1 426.67,143.49 422.03,144.92 417.4,146.41" fill="#1091e2"/>
<polygon points="417.4,150.2 422.03,148.63 426.67,147.09 431.3,145.59 435.93,144.13 440.57,142.72 445.2,141.37 445.2,142.23 440.57,143.62 435.93,145.06 431.3,146.55 426.67,148.08 422.03,149.63 417.4,151.21" fill="#1192e3"/>
<polygon points="417.4,155.5 422.03,153.9 426.67,152.3 431.3,150.71 435.93,149.14 440.57,147.59 445.2,146.07 445.2,147.14 440.57,148.67 435.93,150.24 431.3,151.82 426.67,153.42 422.03,155.03 417.4,156.63" fill="#1194e5"/>
<polygon points="417.4,161.37 422.03,159.77 426.67,158.17 431.3,156.56 435.93,154.95 440.57,153.34 445.2,151.75 445.2,152.98 440.57,154.59 435.93,156.19 431.3,157.8 426.67,159.41 422.03,161.01 417.4,162.61" fill="#1295e7"/>
<polygon points="417.4,167.72 422.03,166.16 426.67,164.59 431.3,163 435.93,161.41 440.57,159.81 445.2,158.21 445.2,159.57 440.57,161.17 435.93,162.77 431.3,164.35 426.67,165.92 422.03,167.49 417.4,169.04" fill="#1397e9"/>
<polygon points="417.4,174.45 422.03,172.94 426.67,171.43 431.3,169.89 435.93,168.35 440.57,166.8 445.2,165.23 445.2,166.68 440.57,168.24 435.93,169.78 431.3,171.31 426.67,172.83 422.03,174.34 417.4,175.83" fill="#1ba1ef"/>
<polygon points="417.4,181.47 422.03,180.02 426.67,178.56 431.3,177.08 435.93,175.6 440.57,174.1 445.2,172.59 445.2,174.09 440.57,175.59 435.93,177.07 431.3,178.54 426.67,180.01 422.03,181.46 417.4,182.9" fill="#3ec4fc"/>
<polygon points="417.4,188.67 422.03,187.27 426.67,185.85 431.3,184.42 435.93,182.99 440.57,181.55 445.2,180.1 445.2,181.6 440.57,183.04 435.93,184.48 431.3,185.9 426.67,187.32 422.03,188.73 417.4,190.13" fill="#89f0ff"/>
<polygon points="417.4,195.96 422.03,194.57 426.67,193.18 431.3,191.79 435.93,190.39 440.57,188.99 445.2,187.58 445.2,189.07 440.57,190.47 435.93,191.87 431.3,193.26 426.67,194.65 422.03,196.03 417.4,197.42" fill="#3dc5fe"/>
<polygon points="417.4,203.22 422.03,201.83 426.67,200.45 431.3,199.07 435.93,197.69 440.57,196.3 445.2,194.92 445.2,196.36 440.57,197.74 435.93,199.13 431.3,200.51 426.67,201.89 422.03,203.27 417.4,204.66" fill="#1da5f4"/>
<polygon points="417.4,210.34 422.03,208.95 426.67,207.56 431.3,206.17 435.93,204.78 440.57,203.4 445.2,202.01 445.2,203.4 440.57,204.78 435.93,206.17 431.3,207.56 426.67,208.95 422.03,210.34 417.4,211.74" fill="#1ba3f2"/>
<polygon points="417.4,217.23 422.03,215.82 426.67,214.41 431.3,213 435.93,211.6 440.57,210.2 445.2,208.8 445.2,210.12 440.57,211.52 435.93,212.92 431.3,214.33 426.67,215.74 422.03,217.15 417.4,218.57" fill="#18a0f0"/>
<polygon points="417.4,223.79 422.03,222.36 426.67,220.93 431.3,219.5 435.93,218.08 440.57,216.66 445.2,215.25 445.2,216.5 440.57,217.91 435.93,219.33 431.3,220.76 426.67,222.19 422.03,223.62 417.4,225.05" fill="#179fef"/>
<polygon points="417.4,229.91 422.03,228.48 426.67,227.05 431.3,225.62 435.93,224.19 440.57,222.76 445.2,221.33 445.2,222.5 440.57,223.93 435.93,225.36 431.3,226.79 426.67,228.22 422.03,229.65 417.4,231.07" fill="#169dee"/>
<polygon points="417.4,235.51 422.03,234.11 426.67,232.7 431.3,231.29 435.93,229.87 440.57,228.44 445.2,227.01 445.2,228.09 440.57,229.52 435.93,230.95 431.3,232.36 426.67,233.77 422.03,235.17 417.4,236.56" fill="#169ced"/>
<polygon points="417.4,240.5 422.03,239.18 426.67,237.83 431.3,236.47 435.93,235.08 440.57,233.68 445.2,232.27 445.2,233.27 440.57,234.68 435.93,236.07 431.3,237.44 426.67,238.79 422.03,240.12 417.4,241.42" fill="#159bec"/>
<polygon points="417.4,244.82 422.03,243.62 426.67,242.38 431.3,241.1 435.93,239.79 440.57,238.46 445.2,237.1 445.2,238.01 440.57,239.35 435.93,240.67 431.3,241.96 426.67,243.21 422.03,244.43 417.4,245.6" fill="#149aeb"/>
<polygon points="417.4,248.4 422.03,247.37 426.67,246.28 431.3,245.14 435.93,243.95 440.57,242.72 445.2,241.45 445.2,242.26 440.57,243.51 435.93,244.71 431.3,245.87 426.67,246.98 422.03,248.03 417.4,249.03" fill="#1499ea"/>
<polygon points="417.4,251.19 422.03,250.38 426.67,249.49 431.3,248.53 435.93,247.51 440.57,246.42 445.2,245.29 445.2,245.99 440.57,247.09 435.93,248.14 431.3,249.12 426.67,250.04 422.03,250.89 417.4,251.65" fill="#1398ea"/>
<polygon points="417.4,253.15 422.03,252.59 426.67,251.95 431.3,251.21 435.93,250.4 440.57,249.51 445.2,248.55 445.2,249.13 440.57,250.05 435.93,250.89 431.3,251.66 426.67,252.34 422.03,252.94 417.4,253.44" fill="#1398e9"/>
<polygon points="417.4,254.25 422.03,253.98 426.67,253.6 431.3,253.13 435.93,252.57 440.57,251.92 445.2,251.18 445.2,251.63 440.57,252.31 435.93,252.91 431.3,253.42 426.67,253.83 422.03,254.15 417.4,254.37" fill="#1397e9"/>
<polygon points="417.4,254.5 422.03,254.5 426.67,254.42 431.3,254.24 435.93,253.96 440.57,253.58 445.2,253.1 445.2,253.4 440.57,253.81 435.93,254.14 431.3,254.36 426.67,254.48 422.03,254.5 417.4,254.5" fill="#1397e9"/>
<polygon points="417.4,254.5 422.03,254.5 426.67,254.5 431.3,254.5 435.93,254.49 440.57,254.41 445.2,254.23 445.2,254.35 440.57,254.47 435.93,254.5 431.3,254.5 426.67,254.5 422.03,254.5 417.4,254.5" fill="#1397e9"/>
</g>
<clipPath id="cg3"><rect x="452" y="129.7" width="33.2" height="128.3"/></clipPath>
<g clip-path="url(#cg3)"><rect x="452" y="129.7" width="33.2" height="128.3" fill="url(#gap)"/>
<polygon points="452,129.7 457.53,129.7 463.07,129.7 468.6,129.7 474.13,129.7 479.67,129.7 485.2,129.7 485.2,129.7 479.67,129.7 474.13,129.7 468.6,129.7 463.07,129.7 457.53,129.75 452,130.02" fill="#0b86d8"/>
<polygon points="452,130.14 457.53,129.81 463.07,129.7 468.6,129.7 474.13,129.7 479.67,129.7 485.2,129.7 485.2,129.7 479.67,129.7 474.13,129.7 468.6,129.75 463.07,130 457.53,130.46 452,131.14" fill="#0b86d8"/>
<polygon points="452,131.39 457.53,130.66 463.07,130.12 468.6,129.8 474.13,129.7 479.67,129.7 485.2,129.7 485.2,129.7 479.67,129.75 474.13,130 468.6,130.47 463.07,131.14 457.53,132 452,133.04" fill="#0b86d8"/>
<polygon points="452,133.42 457.53,132.32 463.07,131.4 468.6,130.67 474.13,130.13 479.67,129.81 485.2,129.7 485.2,130.04 479.67,130.52 474.13,131.21 468.6,132.09 463.07,133.15 457.53,134.36 452,135.71" fill="#0b86d9"/>
<polygon points="452,136.21 457.53,134.81 463.07,133.55 468.6,132.44 474.13,131.5 479.67,130.74 485.2,130.18 485.2,131.39 479.67,132.3 474.13,133.39 468.6,134.64 463.07,136.02 457.53,137.51 452,139.11" fill="#0b87d9"/>
<polygon points="452,139.72 457.53,138.09 463.07,136.55 468.6,135.13 474.13,133.83 479.67,132.68 485.2,131.7 485.2,133.83 479.67,135.13 474.13,136.55 468.6,138.09 463.07,139.72 457.53,141.43 452,143.2" fill="#0b88da"/>
<polygon points="452,143.91 457.53,142.12 463.07,140.39 468.6,138.72 474.13,137.15 479.67,135.68 485.2,134.33 485.2,137.39 479.67,138.99 474.13,140.66 468.6,142.41 463.07,144.21 457.53,146.05 452,147.93" fill="#0b88db"/>
<polygon points="452,148.74 457.53,146.85 463.07,144.99 468.6,143.17 474.13,141.4 479.67,139.69 485.2,138.07 485.2,142.02 479.67,143.81 474.13,145.64 468.6,147.51 463.07,149.41 457.53,151.31 452,153.23" fill="#0b89dc"/>
<polygon points="452,154.13 457.53,152.21 463.07,150.3 468.6,148.4 474.13,146.51 479.67,144.66 485.2,142.85 485.2,147.41 479.67,149.31 474.13,151.21 468.6,153.13 463.07,155.05 457.53,156.96 452,158.87" fill="#0c8ade"/>
<polygon points="452,160.02 457.53,158.11 463.07,156.2 468.6,154.29 474.13,152.37 479.67,150.45 485.2,148.55 485.2,153.49 479.67,155.41 474.13,157.32 468.6,159.23 463.07,161.12 457.53,163.01 452,164.88" fill="#0c8cdf"/>
<polygon points="452,166.33 457.53,164.48 463.07,162.6 468.6,160.72 474.13,158.82 479.67,156.91 485.2,154.99 485.2,160.08 479.67,161.98 474.13,163.85 468.6,165.72 463.07,167.56 457.53,169.39 452,171.2" fill="#0c8de1"/>
<polygon points="452,172.99 457.53,171.2 463.07,169.38 468.6,167.55 474.13,165.71 479.67,163.85 485.2,161.97 485.2,167.02 479.67,168.85 474.13,170.67 468.6,172.47 463.07,174.26 457.53,176.03 452,177.78" fill="#0d90e4"/>
<polygon points="452,179.92 457.53,178.18 463.07,176.43 468.6,174.66 474.13,172.88 479.67,171.08 485.2,169.27 485.2,174.12 479.67,175.89 474.13,177.65 468.6,179.39 463.07,181.12 457.53,182.83 452,184.53" fill="#1097e9"/>
<polygon points="452,187.02 457.53,185.33 463.07,183.63 468.6,181.92 474.13,180.2 479.67,178.46 485.2,176.72 485.2,181.25 479.67,182.97 474.13,184.67 468.6,186.36 463.07,188.04 457.53,189.72 452,191.39" fill="#1dadf9"/>
<polygon points="452,194.2 457.53,192.54 463.07,190.88 468.6,189.21 474.13,187.53 479.67,185.85 485.2,184.15 485.2,188.52 479.67,190.19 474.13,191.86 468.6,193.52 463.07,195.17 457.53,196.83 452,198.48" fill="#149ff0"/>
<polygon points="452,201.38 457.53,199.73 463.07,198.08 468.6,196.43 474.13,194.77 479.67,193.12 485.2,191.45 485.2,196.01 479.67,197.66 474.13,199.31 468.6,200.96 463.07,202.61 457.53,204.27 452,205.92" fill="#0e93e7"/>
<polygon points="452,208.47 457.53,206.81 463.07,205.15 468.6,203.5 474.13,201.84 479.67,200.19 485.2,198.54 485.2,203.22 479.67,204.87 474.13,206.53 468.6,208.19 463.07,209.85 457.53,211.52 452,213.19" fill="#0d90e4"/>
<polygon points="452,215.37 457.53,213.69 463.07,212.01 468.6,210.34 474.13,208.68 479.67,207.02 485.2,205.36 485.2,210.1 479.67,211.77 474.13,213.44 468.6,215.12 463.07,216.8 457.53,218.5 452,220.19" fill="#0c8de1"/>
<polygon points="452,222 457.53,220.3 463.07,218.6 468.6,216.91 474.13,215.22 479.67,213.54 485.2,211.87 485.2,216.61 479.67,218.3 474.13,220 468.6,221.7 463.07,223.4 457.53,225.11 452,226.82" fill="#0c8bdf"/>
<polygon points="452,228.28 457.53,226.56 463.07,224.85 468.6,223.15 474.13,221.44 479.67,219.74 485.2,218.05 485.2,222.74 479.67,224.45 474.13,226.16 468.6,227.87 463.07,229.58 457.53,231.29 452,232.99" fill="#0c8ade"/>
<polygon points="452,234.12 457.53,232.42 463.07,230.72 468.6,229.01 474.13,227.3 479.67,225.59 485.2,223.88 485.2,228.47 479.67,230.18 474.13,231.89 468.6,233.59 463.07,235.28 457.53,236.95 452,238.61" fill="#0b89dc"/>
<polygon points="452,239.46 457.53,237.81 463.07,236.14 468.6,234.46 474.13,232.76 479.67,231.06 485.2,229.35 485.2,233.66 479.67,235.35 474.13,237.03 468.6,238.69 463.07,240.32 457.53,241.93 452,243.5" fill="#0b88db"/>
<polygon points="452,244.22 457.53,242.67 463.07,241.08 468.6,239.45 474.13,237.8 479.67,236.14 485.2,234.45 485.2,238.44 479.67,240.08 474.13,241.69 468.6,243.27 463.07,244.81 457.53,246.3 452,247.74" fill="#0b87da"/>
<polygon points="452,248.35 457.53,246.94 463.07,245.47 468.6,243.95 474.13,242.39 479.67,240.79 485.2,239.16 485.2,242.8 479.67,244.36 474.13,245.86 468.6,247.32 463.07,248.71 457.53,250.04 452,251.3" fill="#0b86d9"/>
<polygon points="452,251.8 457.53,250.58 463.07,249.28 468.6,247.91 474.13,246.48 479.67,245 485.2,243.46 485.2,246.73 479.67,248.15 474.13,249.51 468.6,250.79 463.07,252 457.53,253.11 452,254.13" fill="#0a86d8"/>
<polygon points="452,254.51 457.53,253.54 463.07,252.46 468.6,251.29 474.13,250.04 479.67,248.71 485.2,247.32 485.2,250.17 479.67,251.42 474.13,252.58 468.6,253.64 463.07,254.61 457.53,255.47 452,256.21" fill="#0a85d7"/>
<polygon points="452,256.47 457.53,255.77 463.07,254.96 468.6,254.04 474.13,253.01 479.67,251.89 485.2,250.67 485.2,253.08 479.67,254.1 474.13,255.01 468.6,255.82 463.07,256.51 457.53,257.07 452,257.5" fill="#0a85d7"/>
<polygon points="452,257.63 457.53,257.25 463.07,256.74 468.6,256.1 474.13,255.34 479.67,254.47 485.2,253.49 485.2,255.38 479.67,256.13 474.13,256.77 468.6,257.27 463.07,257.65 457.53,257.89 452,257.99" fill="#0a84d7"/>
<polygon points="452,258 457.53,257.95 463.07,257.76 468.6,257.44 474.13,256.98 479.67,256.39 485.2,255.69 485.2,257 479.67,257.45 474.13,257.77 468.6,257.95 463.07,258 457.53,258 452,258" fill="#0a84d6"/>
<polygon points="452,258 457.53,258 463.07,258 468.6,257.99 474.13,257.86 479.67,257.59 485.2,257.19 485.2,257.87 479.67,257.99 474.13,258 468.6,258 463.07,258 457.53,258 452,258" fill="#0a84d6"/>
<polygon points="452,258 457.53,258 463.07,258 468.6,258 474.13,258 479.67,258 485.2,257.93 485.2,258 479.67,258 474.13,258 468.6,258 463.07,258 457.53,258 452,258" fill="#0a84d6"/>
<polygon points="452,129.7 457.53,129.7 463.07,129.7 468.6,129.7 474.13,129.7 479.67,129.7 485.2,129.7 485.2,129.7 479.67,129.7 474.13,129.7 468.6,129.7 463.07,129.7 457.53,129.7 452,129.72" fill="#0e8ede"/>
<polygon points="452,130.14 457.53,129.81 463.07,129.7 468.6,129.7 474.13,129.7 479.67,129.7 485.2,129.7 485.2,129.7 479.67,129.7 474.13,129.7 468.6,129.7 463.07,129.72 457.53,129.92 452,130.33" fill="#0e8ede"/>
<polygon points="452,131.39 457.53,130.66 463.07,130.12 468.6,129.8 474.13,129.7 479.67,129.7 485.2,129.7 485.2,129.7 479.67,129.7 474.13,129.71 468.6,129.9 463.07,130.31 457.53,130.92 452,131.73" fill="#0e8ede"/>
<polygon points="452,133.42 457.53,132.32 463.07,131.4 468.6,130.67 474.13,130.13 479.67,129.81 485.2,129.7 485.2,129.72 479.67,129.91 474.13,130.33 468.6,130.95 463.07,131.76 457.53,132.76 452,133.91" fill="#0e8edf"/>
<polygon points="452,136.21 457.53,134.81 463.07,133.55 468.6,132.44 474.13,131.5 479.67,130.74 485.2,130.18 485.2,130.4 479.67,131.04 474.13,131.88 468.6,132.9 463.07,134.08 457.53,135.4 452,136.85" fill="#0f8fdf"/>
<polygon points="452,139.72 457.53,138.09 463.07,136.55 468.6,135.13 474.13,133.83 479.67,132.68 485.2,131.7 485.2,132.14 479.67,133.2 474.13,134.42 468.6,135.78 463.07,137.26 457.53,138.84 452,140.51" fill="#0f90e0"/>
<polygon points="452,143.91 457.53,142.12 463.07,140.39 468.6,138.72 474.13,137.15 479.67,135.68 485.2,134.33 485.2,134.99 479.67,136.4 474.13,137.93 468.6,139.55 463.07,141.25 457.53,143.01 452,144.83" fill="#1091e1"/>
<polygon points="452,148.74 457.53,146.85 463.07,144.99 468.6,143.17 474.13,141.4 479.67,139.69 485.2,138.07 485.2,138.94 479.67,140.62 474.13,142.36 468.6,144.16 463.07,146 457.53,147.88 452,149.77" fill="#1092e3"/>
<polygon points="452,154.13 457.53,152.21 463.07,150.3 468.6,148.4 474.13,146.51 479.67,144.66 485.2,142.85 485.2,143.92 479.67,145.76 474.13,147.63 468.6,149.52 463.07,151.43 457.53,153.35 452,155.27" fill="#1193e4"/>
<polygon points="452,160.02 457.53,158.11 463.07,156.2 468.6,154.29 474.13,152.37 479.67,150.45 485.2,148.55 485.2,149.79 479.67,151.7 474.13,153.61 468.6,155.53 463.07,157.45 457.53,159.35 452,161.25" fill="#1295e6"/>
<polygon points="452,166.33 457.53,164.48 463.07,162.6 468.6,160.72 474.13,158.82 479.67,156.91 485.2,154.99 485.2,156.35 479.67,158.26 474.13,160.17 468.6,162.06 463.07,163.93 457.53,165.79 452,167.64" fill="#1396e8"/>
<polygon points="452,172.99 457.53,171.2 463.07,169.38 468.6,167.55 474.13,165.71 479.67,163.85 485.2,161.97 485.2,163.41 479.67,165.27 474.13,167.12 468.6,168.96 463.07,170.78 457.53,172.58 452,174.36" fill="#1599eb"/>
<polygon points="452,179.92 457.53,178.18 463.07,176.43 468.6,174.66 474.13,172.88 479.67,171.08 485.2,169.27 485.2,170.75 479.67,172.55 474.13,174.34 468.6,176.11 463.07,177.86 457.53,179.6 452,181.33" fill="#26b2f9"/>
<polygon points="452,187.02 457.53,185.33 463.07,183.63 468.6,181.92 474.13,180.2 479.67,178.46 485.2,176.72 485.2,178.21 479.67,179.94 474.13,181.67 468.6,183.38 463.07,185.08 457.53,186.77 452,188.45" fill="#75ebff"/>
<polygon points="452,194.2 457.53,192.54 463.07,190.88 468.6,189.21 474.13,187.53 479.67,185.85 485.2,184.15 485.2,185.62 479.67,187.31 474.13,188.99 468.6,190.66 463.07,192.32 457.53,193.98 452,195.64" fill="#72e0ff"/>
<polygon points="452,201.38 457.53,199.73 463.07,198.08 468.6,196.43 474.13,194.77 479.67,193.12 485.2,191.45 485.2,192.89 479.67,194.55 474.13,196.2 468.6,197.86 463.07,199.51 457.53,201.16 452,202.81" fill="#23abf6"/>
<polygon points="452,208.47 457.53,206.81 463.07,205.15 468.6,203.5 474.13,201.84 479.67,200.19 485.2,198.54 485.2,199.93 479.67,201.58 474.13,203.23 468.6,204.89 463.07,206.54 457.53,208.2 452,209.86" fill="#1ca4f3"/>
<polygon points="452,215.37 457.53,213.69 463.07,212.01 468.6,210.34 474.13,208.68 479.67,207.02 485.2,205.36 485.2,206.69 479.67,208.35 474.13,210.01 468.6,211.68 463.07,213.35 457.53,215.03 452,216.72" fill="#19a1f1"/>
<polygon points="452,222 457.53,220.3 463.07,218.6 468.6,216.91 474.13,215.22 479.67,213.54 485.2,211.87 485.2,213.13 479.67,214.81 474.13,216.49 468.6,218.18 463.07,219.88 457.53,221.58 452,223.29" fill="#189ff0"/>
<polygon points="452,228.28 457.53,226.56 463.07,224.85 468.6,223.15 474.13,221.44 479.67,219.74 485.2,218.05 485.2,219.24 479.67,220.94 474.13,222.64 468.6,224.35 463.07,226.06 457.53,227.77 452,229.48" fill="#179eee"/>
<polygon points="452,234.12 457.53,232.42 463.07,230.72 468.6,229.01 474.13,227.3 479.67,225.59 485.2,223.88 485.2,225 479.67,226.71 474.13,228.42 468.6,230.13 463.07,231.84 457.53,233.54 452,235.23" fill="#169ded"/>
<polygon points="452,239.46 457.53,237.81 463.07,236.14 468.6,234.46 474.13,232.76 479.67,231.06 485.2,229.35 485.2,230.4 479.67,232.11 474.13,233.8 468.6,235.49 463.07,237.17 457.53,238.83 452,240.46" fill="#159bec"/>
<polygon points="452,244.22 457.53,242.67 463.07,241.08 468.6,239.45 474.13,237.8 479.67,236.14 485.2,234.45 485.2,235.43 479.67,237.1 474.13,238.76 468.6,240.39 463.07,242 457.53,243.57 452,245.1" fill="#159aeb"/>
<polygon points="452,248.35 457.53,246.94 463.07,245.47 468.6,243.95 474.13,242.39 479.67,240.79 485.2,239.16 485.2,240.06 479.67,241.67 474.13,243.25 468.6,244.79 463.07,246.28 457.53,247.72 452,249.1" fill="#1499eb"/>
<polygon points="452,251.8 457.53,250.58 463.07,249.28 468.6,247.91 474.13,246.48 479.67,245 485.2,243.46 485.2,244.27 479.67,245.78 474.13,247.24 468.6,248.64 463.07,249.97 457.53,251.23 452,252.4" fill="#1398ea"/>
<polygon points="452,254.51 457.53,253.54 463.07,252.46 468.6,251.29 474.13,250.04 479.67,248.71 485.2,247.32 485.2,248.03 479.67,249.39 474.13,250.68 468.6,251.89 463.07,253.02 457.53,254.04 452,254.97" fill="#1398e9"/>
<polygon points="452,256.47 457.53,255.77 463.07,254.96 468.6,254.04 474.13,253.01 479.67,251.89 485.2,250.67 485.2,251.28 479.67,252.45 474.13,253.53 468.6,254.51 463.07,255.38 457.53,256.13 452,256.77" fill="#1397e9"/>
<polygon points="452,257.63 457.53,257.25 463.07,256.74 468.6,256.1 474.13,255.34 479.67,254.47 485.2,253.49 485.2,253.98 479.67,254.91 474.13,255.73 468.6,256.43 463.07,257.01 457.53,257.46 452,257.77" fill="#1297e8"/>
<polygon points="452,258 457.53,257.95 463.07,257.76 468.6,257.44 474.13,256.98 479.67,256.39 485.2,255.69 485.2,256.05 479.67,256.69 474.13,257.22 468.6,257.61 463.07,257.87 457.53,257.99 452,258" fill="#1296e8"/>
<polygon points="452,258 457.53,258 463.07,258 468.6,257.99 474.13,257.86 479.67,257.59 485.2,257.19 485.2,257.4 479.67,257.74 474.13,257.94 468.6,258 463.07,258 457.53,258 452,258" fill="#1296e8"/>
<polygon points="452,258 457.53,258 463.07,258 468.6,258 474.13,258 479.67,258 485.2,257.93 485.2,257.98 479.67,258 474.13,258 468.6,258 463.07,258 457.53,258 452,258" fill="#1296e8"/>
</g>
<rect x="485.2" y="173.6" width="35.8" height="39.8" fill="url(#gh)"/>
<rect x="481" y="115.3" width="41" height="24.4" fill="url(#gr)"/>
<rect x="517.8" y="113.8" width="1.3" height="27.6" fill="#2020c8"/>
<clipPath id="cr"><rect x="489.3" y="99.2" width="24.6" height="56.8"/></clipPath>
<g clip-path="url(#cr)"><rect x="489.3" y="99.2" width="24.6" height="56.8" fill="url(#gapr)"/>
<polygon points="489.3,99.2 513.9,99.2 513.9,99.22 489.3,99.22" fill="url(#toothr)"/>
<polygon points="489.3,99.5 513.9,99.5 513.9,100.65 489.3,100.65" fill="url(#toothr)"/>
<polygon points="489.3,101.78 513.9,101.78 513.9,104.27 489.3,104.27" fill="url(#toothr)"/>
<polygon points="489.3,106.16 513.9,106.16 513.9,109.78 489.3,109.78" fill="url(#toothr)"/>
<polygon points="489.3,112.28 513.9,112.28 513.9,116.73 489.3,116.73" fill="url(#toothr)"/>
<polygon points="489.3,119.64 513.9,119.64 513.9,124.57 489.3,124.57" fill="url(#toothr)"/>
<polygon points="489.3,127.64 513.9,127.64 513.9,132.64 489.3,132.64" fill="url(#toothr)"/>
<polygon points="489.3,135.64 513.9,135.64 513.9,140.31 489.3,140.31" fill="url(#toothr)"/>
<polygon points="489.3,142.99 513.9,142.99 513.9,146.95 489.3,146.95" fill="url(#toothr)"/>
<polygon points="489.3,149.09 513.9,149.09 513.9,152.02 489.3,152.02" fill="url(#toothr)"/>
<polygon points="489.3,153.45 513.9,153.45 513.9,155.12 489.3,155.12" fill="url(#toothr)"/>
<polygon points="489.3,155.72 513.9,155.72 513.9,156 489.3,156" fill="url(#toothr)"/>
</g>
<clipPath id="cs"><rect x="493.2" y="136.4" width="16.7" height="115.8"/></clipPath>
<g clip-path="url(#cs)"><rect x="493.2" y="136.4" width="16.7" height="115.8" fill="url(#gaps)"/>
<polygon points="493.2,135.47 509.9,135.47 509.9,135.97 493.2,135.97" fill="url(#tooth)"/>
<polygon points="493.2,136.56 509.9,136.56 509.9,137.83 493.2,137.83" fill="url(#tooth)"/>
<polygon points="493.2,138.92 509.9,138.92 509.9,140.93 493.2,140.93" fill="url(#tooth)"/>
<polygon points="493.2,142.51 509.9,142.51 509.9,145.22 493.2,145.22" fill="url(#tooth)"/>
<polygon points="493.2,147.25 509.9,147.25 509.9,150.6 493.2,150.6" fill="url(#tooth)"/>
<polygon points="493.2,153.03 509.9,153.03 509.9,156.94 493.2,156.94" fill="url(#tooth)"/>
<polygon points="493.2,159.71 509.9,159.71 509.9,164.1 493.2,164.1" fill="url(#tooth)"/>
<polygon points="493.2,167.16 509.9,167.16 509.9,171.93 493.2,171.93" fill="url(#tooth)"/>
<polygon points="493.2,175.2 509.9,175.2 509.9,180.24 493.2,180.24" fill="url(#tooth)"/>
<polygon points="493.2,183.66 509.9,183.66 509.9,188.86 493.2,188.86" fill="url(#tooth)"/>
<polygon points="493.2,192.35 509.9,192.35 509.9,197.59 493.2,197.59" fill="url(#tooth)"/>
<polygon points="493.2,201.06 509.9,201.06 509.9,206.23 493.2,206.23" fill="url(#tooth)"/>
<polygon points="493.2,209.62 509.9,209.62 509.9,214.6 493.2,214.6" fill="url(#tooth)"/>
<polygon points="493.2,217.82 509.9,217.82 509.9,222.5 493.2,222.5" fill="url(#tooth)"/>
<polygon points="493.2,225.49 509.9,225.49 509.9,229.76 493.2,229.76" fill="url(#tooth)"/>
<polygon points="493.2,232.44 509.9,232.44 509.9,236.21 493.2,236.21" fill="url(#tooth)"/>
<polygon points="493.2,238.54 509.9,238.54 509.9,241.72 493.2,241.72" fill="url(#tooth)"/>
<polygon points="493.2,243.63 509.9,243.63 509.9,246.16 493.2,246.16" fill="url(#tooth)"/>
<polygon points="493.2,247.62 509.9,247.62 509.9,249.43 493.2,249.43" fill="url(#tooth)"/>
<polygon points="493.2,250.39 509.9,250.39 509.9,251.46 493.2,251.46" fill="url(#tooth)"/>
<polygon points="493.2,251.91 509.9,251.91 509.9,252.2 493.2,252.2" fill="url(#tooth)"/>
</g>
<rect x="546" y="177.5" width="27.4" height="33.1" fill="url(#gh2)"/>
<rect x="567.6" y="199" width="1" height="13.4" fill="#c01010"/><polygon points="568.1,194.4 569.8,201 566.4,201" fill="#c01010"/>
<rect x="519.7" y="168" width="6" height="52.5" fill="#bab648"/>
<rect x="543.4" y="162.3" width="7" height="63.5" fill="#cfcb5c" fill-opacity=".85" stroke="#b4b040" stroke-width=".4"/>
<rect x="524.8" y="157" width="20.9" height="74" fill="#c2bc32" stroke="#aaa628" stroke-width=".5"/>
<clipPath id="crb"><path d="M525.4,160.6 Q526,158.6 531,158.8 Q538,160.6 541.6,165 Q544.6,168.6 544.6,173 L544.6,214.6 Q544.6,219 541.6,222.6 Q538,227 531,228.8 Q526,229 525.4,227 Z"/></clipPath>
<g clip-path="url(#crb)"><rect x="525" y="158" width="20" height="72" fill="#b06e00"/>
<path d="M525.4,159.8 L543.4,164.25 Q544.6,166.92 543.4,169.59 L525.4,166 Z" fill="url(#grl)"/>
<path d="M525.4,166.8 L543.4,170.34 Q544.6,174.22 543.4,178.11 L525.4,175.8 Z" fill="url(#grl)"/>
<path d="M525.4,177.2 L543.4,179.38 Q544.6,183.84 543.4,188.29 L525.4,187.5 Z" fill="url(#grl)"/>
<path d="M525.4,189.1 L543.4,189.74 Q544.6,193.8 543.4,197.86 L525.4,198.5 Z" fill="url(#grl)"/>
<path d="M525.4,200.1 L543.4,199.31 Q544.6,203.76 543.4,208.22 L525.4,210.4 Z" fill="url(#grl)"/>
<path d="M525.4,211.8 L543.4,209.49 Q544.6,213.38 543.4,217.26 L525.4,220.8 Z" fill="url(#grl)"/>
<path d="M525.4,221.6 L543.4,218.01 Q544.6,220.68 543.4,223.35 L525.4,227.8 Z" fill="url(#grl)"/>
</g>
</svg>
<div class="a" style="left:83.5px;top:302.5px;width:516px;height:75.3px;background:#f9f9f9;"></div>
<div class="a" style="left:599px;top:302.5px;width:14.3px;height:35px;background:#f9f9f9;"></div>
<div class="a" style="left:599.5px;top:337.5px;width:13px;height:24.5px;background:#f0f0f0;border:1px solid #e4e4e4;border-left:none"></div>
<div class="a" style="left:600px;top:362px;width:12.4px;height:7.4px;background:#f5f5f5;"></div>
<div class="box" style="left:90px;top:309px;width:503px;height:62px;border-color:#9ca4b2"></div>
<div class="a" style="left:91px;top:361px;width:501px;height:9px;background:#f0f0f0;"></div>
<div class="a" style="left:582px;top:310px;width:10px;height:60px;background:#f0f0f0;"></div>
<div class="a" style="left:101px;top:364.8px;width:342px;height:1.3px;background:#8a8a8a;"></div>
<div class="a" style="left:586.4px;top:320px;width:1.4px;height:17px;background:#8a8a8a;"></div>
<span class="t" style="left:93.3px;top:312.50px;letter-spacing:-0.143px;">Name</span>
<span class="t" style="left:150.6px;top:312.50px;letter-spacing:0.274px;">n [rpm]</span>
<span class="t" style="left:181.2px;top:312.50px;letter-spacing:-0.032px;">∑T [Nm]</span>
<span class="t" style="left:214.4px;top:312.50px;letter-spacing:-0.073px;">∑P [kW]</span>
<span class="t" style="left:247.7px;top:312.50px;letter-spacing:0.007px;">minL10rh [h]</span>
<span class="t" style="left:296.8px;top:312.50px;letter-spacing:0.119px;">minLnmrh [h]</span>
<span class="t" style="left:347.9px;top:312.50px;letter-spacing:-0.045px;">pmax [MPa]</span>
<span class="t" style="left:394px;top:312.50px;letter-spacing:0.004px;">minS0eff</span>
<span class="t" style="left:431.5px;top:312.50px;letter-spacing:-0.142px;">maxSigV [MPa]</span>
<span class="t" style="left:488.2px;top:312.50px;letter-spacing:0.124px;">maxUr [mm]</span>
<span class="t" style="left:537.6px;top:312.50px;letter-spacing:-0.142px;">mass [kg]</span>
<span class="t" style="left:574.4px;top:312.50px;letter-spacing:-0.234px;">ce</span>
<div class="a" style="left:147.4px;top:310px;width:0.8px;height:13.4px;background:#e4e4e4;"></div>
<div class="a" style="left:178px;top:310px;width:0.8px;height:13.4px;background:#e4e4e4;"></div>
<div class="a" style="left:211.2px;top:310px;width:0.8px;height:13.4px;background:#e4e4e4;"></div>
<div class="a" style="left:243.8px;top:310px;width:0.8px;height:13.4px;background:#e4e4e4;"></div>
<div class="a" style="left:293.4px;top:310px;width:0.8px;height:13.4px;background:#e4e4e4;"></div>
<div class="a" style="left:344.4px;top:310px;width:0.8px;height:13.4px;background:#e4e4e4;"></div>
<div class="a" style="left:390.7px;top:310px;width:0.8px;height:13.4px;background:#e4e4e4;"></div>
<div class="a" style="left:427.6px;top:310px;width:0.8px;height:13.4px;background:#e4e4e4;"></div>
<div class="a" style="left:484.3px;top:310px;width:0.8px;height:13.4px;background:#e4e4e4;"></div>
<div class="a" style="left:534px;top:310px;width:0.8px;height:13.4px;background:#e4e4e4;"></div>
<div class="a" style="left:571.8px;top:310px;width:0.8px;height:13.4px;background:#e4e4e4;"></div>
<span class="t" style="left:105px;top:325.90px;letter-spacing:0.003px;">InputShaft</span>
<span class="t" style="left:150.6px;top:325.90px;letter-spacing:-0.435px;">1500</span>
<span class="t" style="left:181.2px;top:325.90px;">-</span>
<span class="t" style="left:214.4px;top:325.90px;">-</span>
<span class="t" style="left:247.7px;top:325.90px;letter-spacing:-0.435px;">4740</span>
<span class="t" style="left:296.8px;top:325.90px;letter-spacing:-0.435px;">3522</span>
<span class="t" style="left:347.9px;top:325.90px;letter-spacing:-0.404px;">2317.81</span>
<span class="t" style="left:394px;top:325.90px;letter-spacing:-0.392px;">99.00</span>
<span class="t" style="left:431.5px;top:325.90px;letter-spacing:-0.399px;">187.21</span>
<span class="t" style="left:488.2px;top:325.90px;letter-spacing:-0.381px;">0.10</span>
<span class="t" style="left:537.6px;top:325.90px;letter-spacing:-0.381px;">3.69</span>
<span class="t" style="left:574.4px;top:325.90px;letter-spacing:-0.435px;">18</span>
<span class="t" style="left:105px;top:337.05px;letter-spacing:-0.060px;">MainShaft</span>
<span class="t" style="left:150.6px;top:337.05px;letter-spacing:-0.392px;">474.6</span>
<span class="t" style="left:181.2px;top:337.05px;">-</span>
<span class="t" style="left:214.4px;top:337.05px;">-</span>
<span class="t" style="left:247.7px;top:337.05px;letter-spacing:-0.435px;">30780</span>
<span class="t" style="left:296.8px;top:337.05px;letter-spacing:-0.435px;">18798</span>
<span class="t" style="left:347.9px;top:337.05px;letter-spacing:-0.404px;">1752.72</span>
<span class="t" style="left:394px;top:337.05px;letter-spacing:-0.392px;">99.00</span>
<span class="t" style="left:431.5px;top:337.05px;letter-spacing:-0.399px;">263.81</span>
<span class="t" style="left:488.2px;top:337.05px;letter-spacing:-0.381px;">0.14</span>
<span class="t" style="left:537.6px;top:337.05px;letter-spacing:-0.392px;">17.35</span>
<span class="t" style="left:574.4px;top:337.05px;letter-spacing:-0.435px;">14</span>
<span class="t" style="left:105px;top:348.20px;letter-spacing:-0.238px;">LayShaft</span>
<span class="t" style="left:150.6px;top:348.20px;letter-spacing:-0.379px;">-766.67</span>
<span class="t" style="left:181.2px;top:348.20px;">-</span>
<span class="t" style="left:214.4px;top:348.20px;">-</span>
<span class="t" style="left:247.7px;top:348.20px;letter-spacing:-0.435px;">13476</span>
<span class="t" style="left:296.8px;top:348.20px;letter-spacing:-0.435px;">8612</span>
<span class="t" style="left:347.9px;top:348.20px;letter-spacing:-0.404px;">2083.74</span>
<span class="t" style="left:394px;top:348.20px;letter-spacing:-0.392px;">99.00</span>
<span class="t" style="left:431.5px;top:348.20px;letter-spacing:-0.399px;">229.41</span>
<span class="t" style="left:488.2px;top:348.20px;letter-spacing:-0.381px;">0.14</span>
<span class="t" style="left:537.6px;top:348.20px;letter-spacing:-0.392px;">14.98</span>
<span class="t" style="left:574.4px;top:348.20px;letter-spacing:-0.435px;">15</span>
<span class="t" style="left:600.4px;top:303px;letter-spacing:.06px;transform-origin:0 0;transform:translate(10px,6px) rotate(90deg)">Shafts</span>
<span class="t" style="left:600.4px;top:337.8px;letter-spacing:.06px;transform-origin:0 0;transform:translate(10px,6px) rotate(90deg)">Beari</span>
<div class="a" style="left:0px;top:388px;width:620px;height:12.5px;background:#dcdcdc;border-top:1px solid #c8c8c8;border-bottom:1px solid #c0c0c0"></div>
<span class="t" style="left:3.5px;top:390.60px;letter-spacing:-0.086px;">Result overview</span>
<div class="a" style="left:0.3px;top:401.5px;width:619px;height:44.6px;border:1px solid #abb1bd;background:#f0f0f0"></div>
<div class="fld" style="left:133px;top:409.3px;width:34px;height:12.9px"></div>
<div class="fld" style="left:351.5px;top:409.3px;width:34.3px;height:12.9px"></div>
<div class="fld" style="left:565.2px;top:409.3px;width:29.4px;height:12.9px"></div>
<div class="fld" style="left:123px;top:426.4px;width:44px;height:12.9px"></div>
<div class="fld" style="left:341px;top:426.4px;width:44.8px;height:12.9px"></div>
<span class="t" style="left:7px;top:411.10px;letter-spacing:0.009px;">Minimal bearing reference life</span>
<span class="t" style="left:108.5px;top:411.10px;letter-spacing:0.042px;">minL1</span>
<span class="t" style="left:135px;top:411.10px;letter-spacing:-0.376px;">1555.59</span>
<span class="t" style="left:171.5px;top:411.10px;">h</span>
<span class="t" style="left:189px;top:411.10px;letter-spacing:0.052px;">Minimal bearing modified reference life</span>
<span class="t" style="left:322.5px;top:411.10px;letter-spacing:0.011px;">minLnn</span>
<span class="t" style="left:353.5px;top:411.10px;letter-spacing:-0.404px;">766.899</span>
<span class="t" style="left:390px;top:411.10px;">h</span>
<span class="t" style="left:407.5px;top:411.10px;letter-spacing:-0.063px;">Minimal static safety for bearings (ISO 76)</span>
<span class="t" style="left:547.5px;top:411.10px;width:13.1px;overflow:hidden;letter-spacing:-.3px;">minS0</span>
<span class="t" style="left:566.8px;top:411.10px;letter-spacing:-0.419px;">2.70937</span>
<span class="t" style="left:7px;top:428.60px;letter-spacing:-0.015px;">Maximal displacement in x</span>
<span class="t" style="left:97.5px;top:428.60px;letter-spacing:-0.216px;">maxUx</span>
<span class="t" style="left:124.5px;top:428.60px;letter-spacing:-0.315px;">0.113141</span>
<span class="t" style="left:171.5px;top:428.60px;letter-spacing:-0.206px;">mm</span>
<span class="t" style="left:189px;top:428.60px;letter-spacing:-0.088px;">Maximal equivalent stress</span>
<span class="t" style="left:307.5px;top:428.60px;letter-spacing:-0.187px;">maxSigV</span>
<span class="t" style="left:342.5px;top:428.60px;letter-spacing:-0.404px;">263.814</span>
<span class="t" style="left:389px;top:428.60px;letter-spacing:-0.106px;">MPa</span>
<div class="a" style="left:577.5px;top:449.5px;width:14.5px;height:13px;background:#fdfdfd;border:1px solid #dcdcdc;border-radius:2px"></div>
<span class="t" style="left:581.3px;top:451.30px;font-size:8.9px;">M</span>
<div class="a" style="left:594.5px;top:448px;width:0.8px;height:16px;background:#dadada;"></div>
<div class="a" style="left:608px;top:448px;width:0.8px;height:16px;background:#dadada;"></div>
<div class="a" style="left:597px;top:450.5px;width:9.7px;height:9.7px;background:#8cc63f;border:1px solid #7ab02e"></div>
<div class="a" style="left:0;top:0;width:620px;height:465px;border:1px solid #cfcfcf;border-radius:4.5px;box-shadow:0 0 0 6px #fff"></div>
<svg class="a" style="left:0;top:0" width="620" height="465" viewBox="0 0 620 465" font-family="Liberation Sans, sans-serif">
<defs>
<linearGradient id="idoc" x1="0" y1="0" x2="1" y2="1"><stop offset="0" stop-color="#f8faff"/><stop offset="1" stop-color="#d8e0f4"/></linearGradient>
<linearGradient id="ifol" x1="0" y1="0" x2="0" y2="1"><stop offset="0" stop-color="#fbd77a"/><stop offset="1" stop-color="#e09a30"/></linearGradient>
<linearGradient id="iflp" x1="0" y1="0" x2="0" y2="1"><stop offset="0" stop-color="#2e3a62"/><stop offset="1" stop-color="#4c6296"/></linearGradient>
<linearGradient id="ibolt" x1="0" y1="0" x2="0" y2="1"><stop offset="0" stop-color="#ffe860"/><stop offset=".55" stop-color="#ffc020"/><stop offset="1" stop-color="#e86a10"/></linearGradient>
<linearGradient id="iprn" x1="0" y1="0" x2="0" y2="1"><stop offset="0" stop-color="#6c82aa"/><stop offset="1" stop-color="#b4c4de"/></linearGradient>
</defs>
<rect x="5.3" y="4.2" width="7.4" height="7" fill="#2c58da"/><rect x="12.4" y="4.2" width="3.4" height="3.2" fill="#d2daea"/><circle cx="11.5" cy="10.1" r="4" fill="#34306c" stroke="#b81a32" stroke-width="1.3"/><circle cx="11.3" cy="10.4" r="1.9" fill="#3a7c8c"/><circle cx="12.6" cy="9.3" r=".8" fill="#c03030"/><circle cx="10.4" cy="11.4" r=".7" fill="#50a060"/><rect x="11" y="6.6" width=".9" height="2.4" fill="#708ad0"/>
<path d="M545.5,9.7 H552" stroke="#222" stroke-width=".8"/>
<rect x="573.6" y="6.4" width="6" height="6" rx="1" fill="none" stroke="#222" stroke-width=".8"/>
<path d="M602,6.3 L608.2,12.6 M608.2,6.3 L602,12.6" stroke="#222" stroke-width=".8"/>
<rect x="3.6" y="35.5" width="1" height="1" fill="#b0b0b0"/>
<rect x="3.6" y="37.8" width="1" height="1" fill="#b0b0b0"/>
<rect x="3.6" y="40.1" width="1" height="1" fill="#b0b0b0"/>
<rect x="3.6" y="42.4" width="1" height="1" fill="#b0b0b0"/>
<rect x="3.6" y="44.7" width="1" height="1" fill="#b0b0b0"/>
<rect x="3.6" y="47.0" width="1" height="1" fill="#b0b0b0"/>
<rect x="3.6" y="49.3" width="1" height="1" fill="#b0b0b0"/>
<path d="M10.6,35.6 H18.6 L21.8,38.8 V49.3 H10.6 Z" fill="url(#idoc)" stroke="#a8b2d6" stroke-width=".8"/><path d="M18.6,35.6 V38.8 H21.8" fill="#fff" stroke="#a8b2d6" stroke-width=".7"/>
<path d="M28.6,47.3 V38.6 Q28.6,37.5 29.6,37.5 H33.4 L34.8,39 H40 Q41,39 41,40 V41.5 H30.8 Z" fill="#f0c050"/><path d="M28.6,47.4 L31.2,41.2 H42.6 L40.2,47.4 Z" fill="url(#ifol)"/>
<rect x="48.2" y="36.6" width="12.6" height="12.4" rx="1.2" fill="url(#iflp)"/><rect x="51" y="36.6" width="7" height="4.4" fill="#c8d2e6"/><rect x="55.3" y="37.2" width="1.6" height="3.2" fill="#34477c"/><rect x="50.4" y="43.3" width="8.4" height="5.7" fill="#e4ecf8"/><rect x="51.6" y="45" width="6" height=".8" fill="#7a9cd8"/><rect x="51.6" y="46.8" width="6" height=".8" fill="#7a9cd8"/>
<rect x="65.9" y="35.3" width=".8" height="14.5" fill="#d4d4d4"/>
<circle cx="77.5" cy="43.1" r="5.9" fill="none" stroke="#c4c4cc" stroke-width="2.4" stroke-dasharray="2.6 2.03"/><circle cx="77.5" cy="43.1" r="5.6" fill="#c6c6ce"/><circle cx="77.5" cy="43.1" r="5.6" fill="none" stroke="#b0b0ba" stroke-width=".5"/><circle cx="77.5" cy="43.1" r="2" fill="#e4e4ea"/>
<path d="M79.2,34.9 L83.5,34.9 L80.9,40.3 L83.4,40.3 L76.3,50.3 L78.4,43.5 L75.5,43.5 Z" fill="url(#ibolt)" stroke="#e8861c" stroke-width=".5"/>
<rect x="90.6" y="36.6" width="12.4" height="12.8" rx=".8" fill="#f6f8fc" stroke="#5c9ad8" stroke-width="1"/><path d="M91.2,40.6 H102.4 M91.2,44.4 H102.4 M95,37.2 V48.8 M98.8,37.2 V48.8" stroke="#c8ccd6" stroke-width=".6"/>
<polygon points="100.9,42.7 101.9,45.2 104.6,45.4 102.5,47.1 103.2,49.8 100.9,48.3 98.6,49.8 99.3,47.1 97.2,45.4 99.9,45.2" fill="#f5a020" stroke="#e07810" stroke-width=".4"/><circle cx="100.9" cy="46.6" r="1.1" fill="#ffe070"/>
<rect x="112" y="35.6" width="8.4" height="5.4" fill="#eef0f4" stroke="#b0b8c8" stroke-width=".5"/><path d="M109,42 Q109,40.4 110.6,40.4 H121.8 Q123.4,40.4 123.4,42 V47.4 H109 Z" fill="url(#iprn)"/><rect x="110.4" y="45.6" width="11.6" height="3.4" rx=".8" fill="#d4dcec" stroke="#8a9cc0" stroke-width=".5"/><rect x="113" y="46.4" width="6.4" height="1.4" fill="#58a0e8"/>
<polygon points="598.3,65.6 599.6,65.6 601.3,70.4 600.0,72.6 598.3,72.6" fill="#18a038"/>
<polygon points="606.6,73.9 606.6,72.8 602.8,71.0 600.2,72.4 600.2,73.9" fill="#2030b0"/>
<rect x="598.3" y="72.4" width="1.7" height="1.6" fill="#d81828"/>
<text x="600.6" y="66.6" font-size="5" font-weight="bold" fill="#111">Y</text>
<text x="606.2" y="72.2" font-size="5" font-weight="bold" fill="#111">Z</text>
<polygon points="609.4,82.6 608.1,82.6 606.4,87.0 607.7,89.2 609.4,89.2" fill="#18a038"/>
<polygon points="601.0,90.4 601.0,89.3 605.0,87.5 607.6,88.9 607.6,90.4" fill="#2030b0"/>
<rect x="607.8" y="89" width="1.7" height="1.6" fill="#d81828"/>
<text x="604.4" y="83.4" font-size="5" font-weight="bold" fill="#111">Y</text>
<text x="598.4" y="88.5" font-size="5" font-weight="bold" fill="#111">Z</text>
<polygon points="598.3,97.8 599.6,97.8 601.3,102.4 600.0,104.6 598.3,104.6" fill="#2030b0"/>
<polygon points="606.6,105.9 606.6,104.8 602.8,103.0 600.2,104.4 600.2,105.9" fill="#d81828"/>
<rect x="598.3" y="104.4" width="1.7" height="1.6" fill="#18a038"/>
<text x="600.5" y="98.7" font-size="5" font-weight="bold" fill="#111">Z</text>
<text x="606.2" y="104" font-size="5" font-weight="bold" fill="#111">X</text>
<polygon points="607.0,111.1 607.0,112.2 602.8,114.0 600.2,112.6 600.2,111.1" fill="#d81828"/>
<polygon points="598.3,118.8 599.6,118.8 601.3,114.6 600.0,112.4 598.3,112.4" fill="#2030b0"/>
<rect x="598.3" y="111" width="1.7" height="1.6" fill="#18a038"/>
<text x="606.2" y="117.6" font-size="5" font-weight="bold" fill="#111">X</text>
<text x="601.6" y="121.3" font-size="5" font-weight="bold" fill="#111">Z</text>
<polygon points="607.0,126.9 607.0,128.0 602.8,129.8 600.2,128.4 600.2,126.9" fill="#d81828"/>
<polygon points="598.3,135.0 599.6,135.0 601.3,130.4 600.0,128.2 598.3,128.2" fill="#18a038"/>
<rect x="598.3" y="126.8" width="1.7" height="1.6" fill="#2030b0"/>
<text x="606.2" y="133.4" font-size="5" font-weight="bold" fill="#111">X</text>
<text x="601.6" y="137.4" font-size="5" font-weight="bold" fill="#111">Y</text>
<polygon points="598.3,146.0 599.6,146.0 601.3,150.6 600.0,152.8 598.3,152.8" fill="#18a038"/>
<polygon points="606.6,154.1 606.6,153.0 602.8,151.2 600.2,152.6 600.2,154.1" fill="#d81828"/>
<rect x="598.3" y="152.6" width="1.7" height="1.6" fill="#2030b0"/>
<text x="600.5" y="147.2" font-size="5" font-weight="bold" fill="#111">Y</text>
<text x="606.2" y="152.2" font-size="5" font-weight="bold" fill="#111">X</text>
<circle cx="605.8" cy="163.2" r="3.4" fill="#fafafa" stroke="#111" stroke-width="1.1"/><path d="M603.4,165.8 L598.6,170.4" stroke="#111" stroke-width="1.8"/><path d="M604.4,168.2 H609 M606.7,166 V170.4" stroke="#111" stroke-width=".9"/>
<circle cx="605.8" cy="180.2" r="3.4" fill="#fafafa" stroke="#111" stroke-width="1.1"/><path d="M603.4,182.8 L598.6,187.4" stroke="#111" stroke-width="1.8"/><path d="M604.6,186 H609" stroke="#111" stroke-width=".9"/>
<rect x="598" y="191.4" width="12" height="11.4" fill="#8c8c8c" stroke="#333" stroke-width=".8"/><circle cx="605.4" cy="196" r="3.3" fill="#fafafa" stroke="#111" stroke-width="1"/><path d="M603,198.6 L599,202.2" stroke="#111" stroke-width="1.7"/>
<rect x="67.0" y="58.2" width="3.6" height="3" fill="#f0f0f0" stroke="#333" stroke-width=".7"/><rect x="65.6" y="60.0" width="3.6" height="3" fill="#f0f0f0" stroke="#333" stroke-width=".7"/>
<rect x="611.6" y="391.8" width="3.6" height="3" fill="#f0f0f0" stroke="#333" stroke-width=".7"/><rect x="610.2" y="393.6" width="3.6" height="3" fill="#f0f0f0" stroke="#333" stroke-width=".7"/>
<path d="M4.6,73.5 L7.1,76.1 L9.6,73.5" fill="none" stroke="#2a2a2a" stroke-width="1.15"/>
<path d="M17.2,106.5 L19.7,109.1 L22.2,106.5" fill="none" stroke="#2a2a2a" stroke-width="1.15"/>
<path d="M30.5,116.6 L33.4,119.5 L30.5,122.4" fill="none" stroke="#8a8a8a" stroke-width=".8"/>
<path d="M30.5,127.69999999999999 L33.4,130.6 L30.5,133.5" fill="none" stroke="#8a8a8a" stroke-width=".8"/>
<path d="M30.5,138.79999999999998 L33.4,141.7 L30.5,144.6" fill="none" stroke="#8a8a8a" stroke-width=".8"/>
<path d="M17.9,149.9 L20.799999999999997,152.8 L17.9,155.70000000000002" fill="none" stroke="#8a8a8a" stroke-width=".8"/>
<path d="M17.9,172.1 L20.799999999999997,175 L17.9,177.9" fill="none" stroke="#8a8a8a" stroke-width=".8"/>
<path d="M94.9,328.0 L97.80000000000001,330.3 L94.9,332.6" fill="none" stroke="#777" stroke-width=".8"/>
<path d="M94.9,339.15 L97.80000000000001,341.45 L94.9,343.75" fill="none" stroke="#777" stroke-width=".8"/>
<path d="M94.9,350.3 L97.80000000000001,352.6 L94.9,354.90000000000003" fill="none" stroke="#777" stroke-width=".8"/>
<polygon points="602.6,367.8 609.6,367.8 606.1,364.3" fill="#b4b4b4"/>
<rect x="600.3" y="371.3" width="11.6" height="6.9" rx="1" fill="#fdfdfd" stroke="#d0d0d0" stroke-width=".6"/><polygon points="602.8,373.4 609.4,373.4 606.1,376.8" fill="#111"/>
<path d="M600,455.6 L601.5,457.2 L604,453.8" fill="none" stroke="#e4f2cc" stroke-width=".9"/>
<rect x="616.5" y="460.5" width="1" height="1" fill="#bcbcbc"/>
<rect x="616.5" y="462.5" width="1" height="1" fill="#bcbcbc"/>
<rect x="614.5" y="462.5" width="1" height="1" fill="#bcbcbc"/>
<rect x="616.5" y="458.5" width="1" height="1" fill="#bcbcbc"/>
<rect x="614.5" y="460.5" width="1" height="1" fill="#bcbcbc"/>
<rect x="612.5" y="462.5" width="1" height="1" fill="#bcbcbc"/>
</svg>
</body></html>
